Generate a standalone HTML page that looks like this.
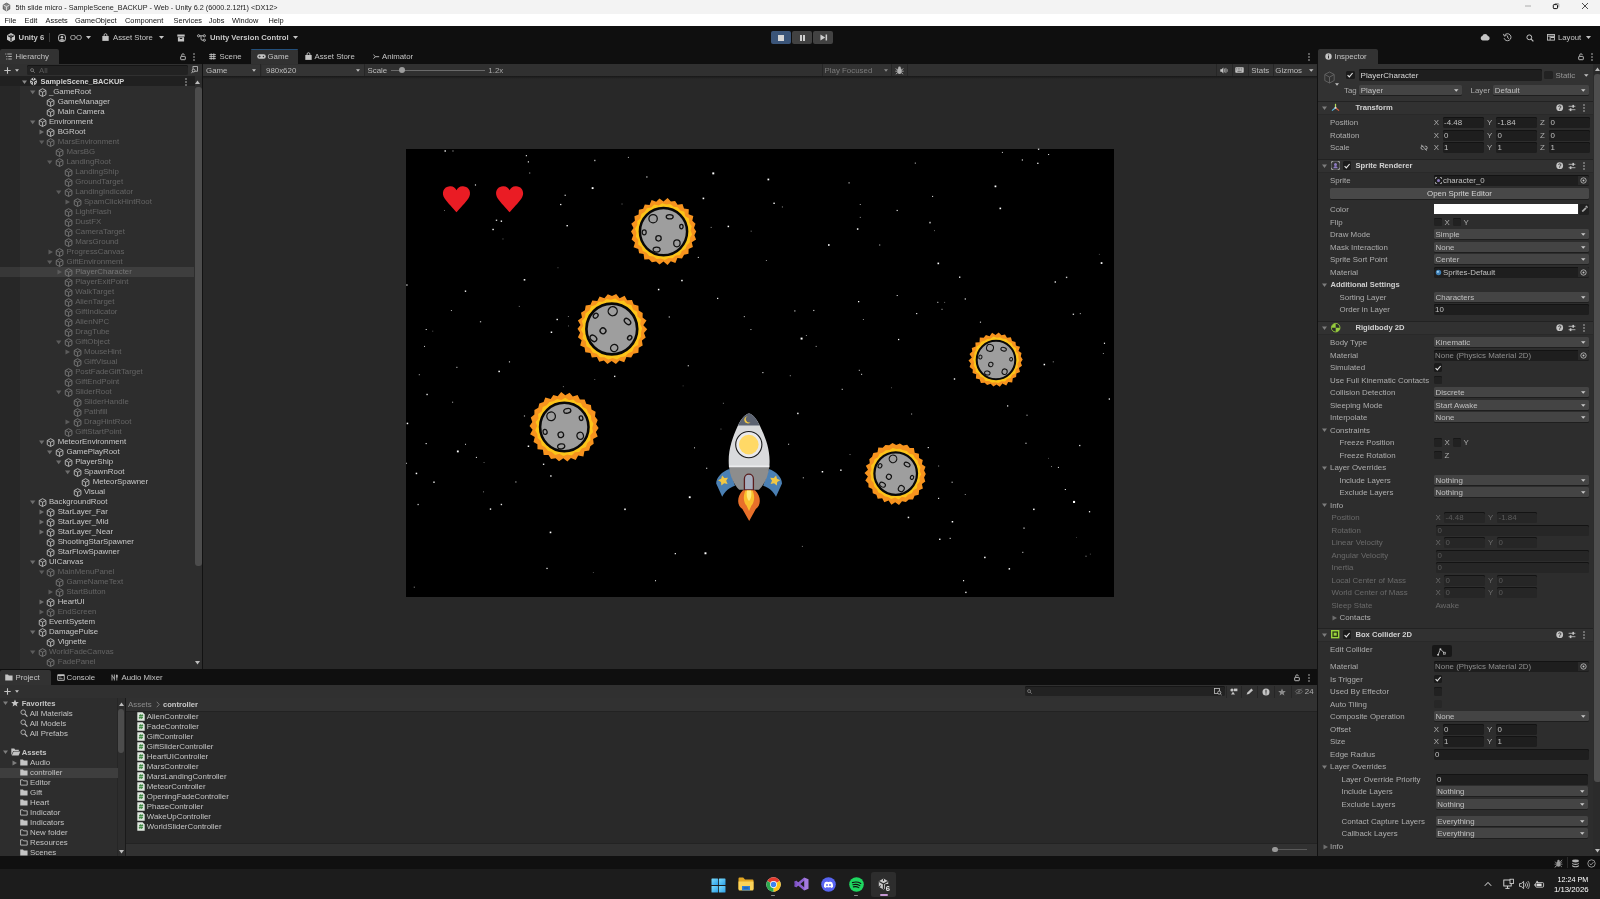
<!DOCTYPE html>
<html><head><meta charset="utf-8"><title>Unity Editor</title><style>
html,body{margin:0;padding:0;background:#1c1c1c;}
#r{position:relative;width:1600px;height:899px;overflow:hidden;font-family:"Liberation Sans",sans-serif;will-change:transform;}
#r div,#r svg{position:absolute;}
#r svg{overflow:visible}
.t{font-size:7.8px;line-height:10px;height:10px;white-space:nowrap;color:#c4c4c4;}
.b{font-weight:bold;}
.win{color:#1a1a1a;font-size:7.25px;}
.menu{color:#111;font-size:7.4px;}
.tbt{color:#c8c8c8;font-size:7.7px;}
.tab{color:#c4c4c4;font-size:7.8px;}
.hi{font-size:7.85px;}
.gt{color:#bdbdbd;font-size:7.9px;}
.in{font-size:7.9px;}
.pj{font-size:7.9px;color:#c4c4c4;}
.b.in,.b.pj{font-size:7.6px;}
</style></head>
<body><div id="r">
<div style="left:0px;top:0px;width:1600px;height:14px;background:#f3f3f3;"></div>
<div style="left:0px;top:14px;width:1600px;height:12px;background:#ffffff;"></div>
<svg style="left:2px;top:2px;" width="9" height="10" viewBox="0 0 16 16"><path d="M8 1.2 L13.8 4.3 V11.7 L8 14.8 L2.2 11.7 V4.3 Z" fill="#8a8a8a" stroke="#3a3a3a" stroke-width="1.3"/><path d="M2.4 4.4 L8 7.5 L13.6 4.4 M8 7.5 V14.6" stroke="#eee" stroke-width="1.4" fill="none"/></svg>
<div class="t win" style="left:15.5px;top:3px;">5th slide micro - SampleScene_BACKUP - Web - Unity 6.2 (6000.2.12f1) &lt;DX12&gt;</div>
<svg style="left:1524px;top:0.7px;" width="8" height="10" viewBox="0 0 8 10"><path d="M1 5 H7" stroke="#9a9a9a" stroke-width="0.8"/></svg>
<svg style="left:1551px;top:1px;" width="10" height="10" viewBox="0 0 10 10"><rect x="2.3" y="3.6" width="4.2" height="4" rx="0.7" fill="none" stroke="#111" stroke-width="1"/><path d="M3.8 2.5 H6.9 A0.9 0.9 0 0 1 7.8 3.4 V6.4" fill="none" stroke="#777" stroke-width="0.7"/></svg>
<svg style="left:1579.5px;top:1px;" width="10" height="10" viewBox="0 0 10 10"><path d="M2 2 L8 8 M8 2 L2 8" stroke="#222" stroke-width="0.8"/></svg>
<div class="t menu" style="left:4.5px;top:16px;">File</div>
<div class="t menu" style="left:24.5px;top:16px;">Edit</div>
<div class="t menu" style="left:45.6px;top:16px;">Assets</div>
<div class="t menu" style="left:75px;top:16px;">GameObject</div>
<div class="t menu" style="left:125px;top:16px;">Component</div>
<div class="t menu" style="left:173.6px;top:16px;">Services</div>
<div class="t menu" style="left:208.75px;top:16px;">Jobs</div>
<div class="t menu" style="left:232px;top:16px;">Window</div>
<div class="t menu" style="left:268.5px;top:16px;">Help</div>
<div style="left:0px;top:26px;width:1600px;height:38px;background:#0f0f0f;"></div>
<svg style="left:5.5px;top:32px;" width="10" height="11" viewBox="0 0 16 16"><path d="M8 0.8 L14.4 4.4 V11.6 L8 15.2 L1.6 11.6 V4.4 Z" fill="#c9c9c9"/><path d="M8 8 L8 14 M8 8 L2.8 5 M8 8 L13.2 5" stroke="#0f0f0f" stroke-width="1.6" fill="none"/><path d="M8 3.2 L11.9 5.5 L8 7.8 L4.1 5.5Z" fill="#0f0f0f" opacity="0.55"/></svg>
<div class="t b tbt" style="left:18.6px;top:33px;">Unity 6</div>
<div style="left:49px;top:33px;width:1px;height:9px;background:#3a3a3a;"></div>
<svg style="left:58px;top:33.5px;" width="8" height="8" viewBox="0 0 8 8"><rect x="0.6" y="0.6" width="6.8" height="6.8" rx="2.2" fill="none" stroke="#c4c4c4" stroke-width="1"/><circle cx="4" cy="3.2" r="1.3" fill="#c4c4c4"/><path d="M1.2 6.8 A2.9 2.4 0 0 1 6.8 6.8 Z" fill="#c4c4c4"/></svg>
<div class="t tbt" style="left:70px;top:33px;">OO</div>
<svg style="left:85.5px;top:36.0px;" width="5" height="3" viewBox="0 0 10 6"><path d="M0 0 H10 L5 6 Z" fill="#c4c4c4"/></svg>
<svg style="left:102.0px;top:33.3px;" width="7" height="8.4" viewBox="0 0 7 8.4"><path d="M0.3 3 H6.7 V7.9 H0.3 Z" fill="#c4c4c4"/><path d="M2.1 3.2 V2.1 A1.4 1.4 0 0 1 4.9 2.1 V3.2" fill="none" stroke="#c4c4c4" stroke-width="0.9"/></svg>
<div class="t tbt" style="left:113px;top:33px;">Asset Store</div>
<svg style="left:158.5px;top:36.0px;" width="5" height="3" viewBox="0 0 10 6"><path d="M0 0 H10 L5 6 Z" fill="#c4c4c4"/></svg>
<svg style="left:176.5px;top:33.5px;" width="8" height="8" viewBox="0 0 8 8"><rect x="0.3" y="0.5" width="7.4" height="2.1" fill="#c4c4c4"/><path d="M0.9 3.2 H7.1 V7.5 H0.9 Z" fill="#c4c4c4"/><rect x="2.8" y="3.9" width="2.4" height="1" fill="#0f0f0f"/></svg>
<svg style="left:197px;top:33.5px;" width="9" height="8" viewBox="0 0 9 8"><circle cx="1.6" cy="1.8" r="1.1" fill="none" stroke="#c4c4c4" stroke-width="0.9"/><circle cx="7.3" cy="1.8" r="1.1" fill="none" stroke="#c4c4c4" stroke-width="0.9"/><circle cx="7.3" cy="6.2" r="1.1" fill="none" stroke="#c4c4c4" stroke-width="0.9"/><path d="M2.7 1.8 H6.2 M4 1.8 V5 A1.2 1.2 0 0 0 5.2 6.2 H6.2" fill="none" stroke="#c4c4c4" stroke-width="0.9"/></svg>
<div class="t b tbt" style="left:210px;top:33px;">Unity Version Control</div>
<svg style="left:292.5px;top:36.0px;" width="5" height="3" viewBox="0 0 10 6"><path d="M0 0 H10 L5 6 Z" fill="#c4c4c4"/></svg>
<div style="left:771px;top:31px;width:20px;height:13px;background:#3b5579;border-radius:2px"></div>
<div style="left:792px;top:31px;width:20px;height:13px;background:#424242;border-radius:2px"></div>
<div style="left:813px;top:31px;width:20px;height:13px;background:#424242;border-radius:2px"></div>
<div style="left:778px;top:34.5px;width:6px;height:6px;background:#d6d6d6;"></div>
<div style="left:800px;top:34.5px;width:1.7px;height:6.2px;background:#cfcfcf;"></div>
<div style="left:803.4px;top:34.5px;width:1.7px;height:6.2px;background:#cfcfcf;"></div>
<svg style="left:819.8px;top:34px;" width="8.4" height="7" viewBox="0 0 9 7"><path d="M0.5 0.3 V6.7 L5.6 3.5 Z" fill="#cfcfcf"/><rect x="6" y="0.3" width="1.6" height="6.4" fill="#cfcfcf"/></svg>
<svg style="left:1480px;top:33px;" width="10" height="8" viewBox="0 0 10 8"><path d="M2.6 7.4 A2.2 2.2 0 0 1 2.3 3.1 A3 3 0 0 1 7.9 2.9 A2.3 2.3 0 0 1 7.8 7.4 Z" fill="#c4c4c4"/></svg>
<svg style="left:1503px;top:33px;" width="9" height="9" viewBox="0 0 9 9"><path d="M1.6 2.2 A3.5 3.5 0 1 1 1.1 5.2" fill="none" stroke="#c4c4c4" stroke-width="0.9"/><path d="M0.4 0.9 L1.4 3.2 L3.6 2.2" fill="none" stroke="#c4c4c4" stroke-width="0.9"/><path d="M4.6 2.7 V4.7 L6 5.6" fill="none" stroke="#c4c4c4" stroke-width="0.9"/></svg>
<svg style="left:1526.0px;top:33.5px;" width="8" height="8" viewBox="0 0 8 8"><circle cx="3.3" cy="3.3" r="2.4" fill="none" stroke="#c4c4c4" stroke-width="1"/><path d="M5.1 5.1 L7.4 7.4" stroke="#c4c4c4" stroke-width="1.2"/></svg>
<svg style="left:1546.6px;top:34.2px;" width="8" height="7" viewBox="0 0 9 8"><rect x="0.5" y="0.5" width="8" height="6.5" fill="none" stroke="#c4c4c4" stroke-width="1"/><path d="M0.5 2.4 H8.5 M3.5 2.4 V7" stroke="#c4c4c4" stroke-width="1"/><rect x="4" y="2.8" width="4" height="1.8" fill="#c4c4c4"/></svg>
<div class="t tbt" style="left:1558px;top:33px;">Layout</div>
<svg style="left:1585.5px;top:36.0px;" width="5" height="3" viewBox="0 0 10 6"><path d="M0 0 H10 L5 6 Z" fill="#c4c4c4"/></svg>
<div style="left:0px;top:49px;width:59px;height:15px;background:#323232;border-radius:2px 2px 0 0"></div>
<svg style="left:5px;top:53px;" width="7" height="7" viewBox="0 0 7 7"><path d="M0.3 1 H1.3 M2.3 1 H6.8 M1.3 3.5 H2.3 M3.3 3.5 H6.8 M1.3 6 H2.3 M3.3 6 H6.8" stroke="#c4c4c4" stroke-width="0.9"/></svg>
<div class="t tab" style="left:15.5px;top:52px;">Hierarchy</div>
<svg style="left:180px;top:52.8px;" width="6" height="7.4" viewBox="0 0 6 7.4"><rect x="0.7" y="3.4" width="4.6" height="3.3" rx="0.5" fill="none" stroke="#bdbdbd" stroke-width="0.95"/><path d="M1.7 3.4 V2.1 A1.3 1.3 0 0 1 4.3 2.1" fill="none" stroke="#bdbdbd" stroke-width="0.85"/></svg>
<svg style="left:192.5px;top:52.5px;" width="2" height="8" viewBox="0 0 2 8"><circle cx="1" cy="1" r="0.8" fill="#bdbdbd"/><circle cx="1" cy="4" r="0.8" fill="#bdbdbd"/><circle cx="1" cy="7" r="0.8" fill="#bdbdbd"/></svg>
<svg style="left:209px;top:53px;" width="7" height="7" viewBox="0 0 7 7"><path d="M0.2 1.6 H6.8 M0.2 3.6 H6.8 M0.2 5.6 H6.8 M2.2 0.4 V6.6 M4.8 0.4 V6.6" stroke="#c4c4c4" stroke-width="0.9"/></svg>
<div class="t tab" style="left:219.5px;top:52px;">Scene</div>
<div style="left:251px;top:49px;width:47px;height:15px;background:#323232;border-radius:2px 2px 0 0"></div>
<div style="left:251px;top:49px;width:47px;height:1px;background:#234f7a;border-radius:2px 2px 0 0"></div>
<svg style="left:256.5px;top:54px;" width="9" height="5" viewBox="0 0 9 5"><rect x="0.2" y="0.3" width="8.6" height="4.4" rx="2.2" fill="#c4c4c4"/><path d="M1.6 2.5 H3.6 M2.6 1.5 V3.5" stroke="#323232" stroke-width="0.7"/><circle cx="6.4" cy="2.5" r="0.7" fill="#323232"/></svg>
<div class="t tab" style="left:267.5px;top:52px;">Game</div>
<svg style="left:304.5px;top:52.3px;" width="7" height="8.4" viewBox="0 0 7 8.4"><path d="M0.3 3 H6.7 V7.9 H0.3 Z" fill="#c4c4c4"/><path d="M2.1 3.2 V2.1 A1.4 1.4 0 0 1 4.9 2.1 V3.2" fill="none" stroke="#c4c4c4" stroke-width="0.9"/></svg>
<div class="t tab" style="left:314.5px;top:52px;">Asset Store</div>
<svg style="left:372.8px;top:53.8px;" width="6.5" height="5.4" viewBox="0 0 8 6"><path d="M0.5 0.6 L3 3 L0.5 5.4 M3 3 H7.6" fill="none" stroke="#c4c4c4" stroke-width="1.1"/></svg>
<div class="t tab" style="left:382px;top:52px;">Animator</div>
<svg style="left:1307.5px;top:52.5px;" width="2" height="8" viewBox="0 0 2 8"><circle cx="1" cy="1" r="0.8" fill="#bdbdbd"/><circle cx="1" cy="4" r="0.8" fill="#bdbdbd"/><circle cx="1" cy="7" r="0.8" fill="#bdbdbd"/></svg>
<div style="left:1318px;top:49px;width:59.5px;height:15px;background:#323232;border-radius:2px 2px 0 0"></div>
<svg style="left:1324.5px;top:53.3px;" width="7" height="7" viewBox="0 0 7 7"><circle cx="3.5" cy="3.5" r="3.2" fill="#c4c4c4"/><rect x="3" y="3" width="1" height="2.4" fill="#323232"/><rect x="3" y="1.6" width="1" height="0.9" fill="#323232"/></svg>
<div class="t tab" style="left:1334.5px;top:52px;">Inspector</div>
<svg style="left:1578px;top:52.8px;" width="6" height="7.4" viewBox="0 0 6 7.4"><rect x="0.7" y="3.4" width="4.6" height="3.3" rx="0.5" fill="none" stroke="#bdbdbd" stroke-width="0.95"/><path d="M1.7 3.4 V2.1 A1.3 1.3 0 0 1 4.3 2.1" fill="none" stroke="#bdbdbd" stroke-width="0.85"/></svg>
<svg style="left:1590.5px;top:52.5px;" width="2" height="8" viewBox="0 0 2 8"><circle cx="1" cy="1" r="0.8" fill="#bdbdbd"/><circle cx="1" cy="4" r="0.8" fill="#bdbdbd"/><circle cx="1" cy="7" r="0.8" fill="#bdbdbd"/></svg>
<div style="left:0px;top:64px;width:201.5px;height:12px;background:#303030;"></div>
<div style="left:0px;top:76px;width:201.5px;height:593px;background:#2d2d2d;"></div>
<div style="left:0px;top:76px;width:19.6px;height:593px;background:#272727;"></div>
<div style="left:201.5px;top:64px;width:1.5px;height:605px;background:#121212;"></div>
<svg style="left:4px;top:67px;" width="7" height="7" viewBox="0 0 7 7"><path d="M3.5 0.3 V6.7 M0.3 3.5 H6.7" stroke="#c4c4c4" stroke-width="1.1"/></svg>
<svg style="left:14.5px;top:68.5px;" width="4" height="3" viewBox="0 0 10 6"><path d="M0 0 H10 L5 6 Z" fill="#c4c4c4"/></svg>
<div style="left:27.3px;top:65px;width:161px;height:10px;background:#222222;border-radius:2px;box-shadow:inset 0 0.8px 0 #121212"></div>
<svg style="left:30.0px;top:67.8px;" width="5" height="5" viewBox="0 0 8 8"><circle cx="3.3" cy="3.3" r="2.4" fill="none" stroke="#9a9a9a" stroke-width="1"/><path d="M5.1 5.1 L7.4 7.4" stroke="#9a9a9a" stroke-width="1.2"/></svg>
<div class="t" style="left:39px;top:66px;color:#5a5a5a">All</div>
<svg style="left:190.5px;top:66px;" width="7" height="8" viewBox="0 0 7 8"><rect x="2" y="0.6" width="4.4" height="4.6" fill="none" stroke="#c4c4c4" stroke-width="0.8"/><circle cx="2.6" cy="4.6" r="1.4" fill="#303030" stroke="#c4c4c4" stroke-width="0.8"/><path d="M1.6 5.6 L0.5 7.2" stroke="#c4c4c4" stroke-width="0.9"/></svg>
<div style="left:0px;top:76.3px;width:194.5px;height:10.2px;background:#202020;"></div>
<svg style="left:21.5px;top:79.5px;" width="5" height="5" viewBox="0 0 10 10"><path d="M0 1 H10 L5 8 Z" fill="#8a8a8a"/></svg>
<svg style="left:28.5px;top:77px;" width="9" height="9" viewBox="0 0 16 16"><path d="M8 1 L14 4.4 V11.6 L8 15 L2 11.6 V4.4 Z" fill="#d0d0d0"/><path d="M8 8 V15 M8 8 L2 4.4 M8 8 L14 4.4" stroke="#202020" stroke-width="2.2"/><path d="M8 1 V4.5 M2 11.6 L5 9.8 M14 11.6 L11 9.8" stroke="#202020" stroke-width="1.6"/></svg>
<div class="t b" style="left:40.5px;top:77px;color:#d2d2d2;font-size:7.4px">SampleScene_BACKUP</div>
<svg style="left:185px;top:77.7px;" width="2" height="8" viewBox="0 0 2 8"><circle cx="1" cy="1" r="0.8" fill="#bdbdbd"/><circle cx="1" cy="4" r="0.8" fill="#bdbdbd"/><circle cx="1" cy="7" r="0.8" fill="#bdbdbd"/></svg>
<div style="left:194.5px;top:76px;width:7px;height:593px;background:#2d2d2d;"></div>
<div style="left:195px;top:87px;width:6.5px;height:478.5px;background:#4c4c4c;border-radius:3px"></div>
<svg style="left:195px;top:79.5px;" width="5" height="4" viewBox="0 0 5 4"><path d="M0 4 H5 L2.5 0.6 Z" fill="#bdbdbd"/></svg>
<svg style="left:195px;top:661px;" width="5" height="4" viewBox="0 0 5 4"><path d="M0 0 H5 L2.5 3.4 Z" fill="#bdbdbd"/></svg>
<div style="left:0;top:76px;width:194px;height:593px;overflow:hidden">
<svg style="left:37.699999999999996px;top:11.6px;" width="9.2" height="9.2" viewBox="0 0 16 16"><path d="M8 1.2 L13.8 4.3 V11.7 L8 14.8 L2.2 11.7 V4.3 Z M2.4 4.4 L8 7.5 L13.6 4.4 M8 7.5 V14.6" fill="none" stroke="#c0c0c0" stroke-width="1.55" stroke-linejoin="round"/></svg>
<svg style="left:29.8px;top:13.5px;" width="5.4" height="5.4" viewBox="0 0 10 10"><path d="M0 1 H10 L5 8 Z" fill="#6e6e6e"/></svg>
<div class="t hi" style="left:48.9px;top:11px;color:#c8c8c8">_GameRoot</div>
<svg style="left:46.449999999999996px;top:21.6px;" width="9.2" height="9.2" viewBox="0 0 16 16"><path d="M8 1.2 L13.8 4.3 V11.7 L8 14.8 L2.2 11.7 V4.3 Z M2.4 4.4 L8 7.5 L13.6 4.4 M8 7.5 V14.6" fill="none" stroke="#c0c0c0" stroke-width="1.55" stroke-linejoin="round"/></svg>
<div class="t hi" style="left:57.65px;top:21px;color:#c8c8c8">GameManager</div>
<svg style="left:46.449999999999996px;top:31.6px;" width="9.2" height="9.2" viewBox="0 0 16 16"><path d="M8 1.2 L13.8 4.3 V11.7 L8 14.8 L2.2 11.7 V4.3 Z M2.4 4.4 L8 7.5 L13.6 4.4 M8 7.5 V14.6" fill="none" stroke="#c0c0c0" stroke-width="1.55" stroke-linejoin="round"/></svg>
<div class="t hi" style="left:57.65px;top:31px;color:#c8c8c8">Main Camera</div>
<svg style="left:37.699999999999996px;top:41.6px;" width="9.2" height="9.2" viewBox="0 0 16 16"><path d="M8 1.2 L13.8 4.3 V11.7 L8 14.8 L2.2 11.7 V4.3 Z M2.4 4.4 L8 7.5 L13.6 4.4 M8 7.5 V14.6" fill="none" stroke="#c0c0c0" stroke-width="1.55" stroke-linejoin="round"/></svg>
<svg style="left:29.8px;top:43.5px;" width="5.4" height="5.4" viewBox="0 0 10 10"><path d="M0 1 H10 L5 8 Z" fill="#6e6e6e"/></svg>
<div class="t hi" style="left:48.9px;top:41px;color:#c8c8c8">Environment</div>
<svg style="left:46.449999999999996px;top:51.6px;" width="9.2" height="9.2" viewBox="0 0 16 16"><path d="M8 1.2 L13.8 4.3 V11.7 L8 14.8 L2.2 11.7 V4.3 Z M2.4 4.4 L8 7.5 L13.6 4.4 M8 7.5 V14.6" fill="none" stroke="#c0c0c0" stroke-width="1.55" stroke-linejoin="round"/></svg>
<svg style="left:39.15px;top:53.199999999999996px;" width="5" height="5.75" viewBox="0 0 10 10"><path d="M1 0 V10 L10 5 Z" fill="#6e6e6e"/></svg>
<div class="t hi" style="left:57.65px;top:51px;color:#c8c8c8">BGRoot</div>
<svg style="left:46.449999999999996px;top:61.6px;" width="9.2" height="9.2" viewBox="0 0 16 16"><path d="M8 1.2 L13.8 4.3 V11.7 L8 14.8 L2.2 11.7 V4.3 Z M2.4 4.4 L8 7.5 L13.6 4.4 M8 7.5 V14.6" fill="none" stroke="#7a7a7a" stroke-width="1.55" stroke-linejoin="round"/></svg>
<svg style="left:38.55px;top:63.5px;" width="5.4" height="5.4" viewBox="0 0 10 10"><path d="M0 1 H10 L5 8 Z" fill="#5c5c5c"/></svg>
<div class="t hi" style="left:57.65px;top:61px;color:#646464">MarsEnvironment</div>
<svg style="left:55.199999999999996px;top:71.60000000000001px;" width="9.2" height="9.2" viewBox="0 0 16 16"><path d="M8 1.2 L13.8 4.3 V11.7 L8 14.8 L2.2 11.7 V4.3 Z M2.4 4.4 L8 7.5 L13.6 4.4 M8 7.5 V14.6" fill="none" stroke="#7a7a7a" stroke-width="1.55" stroke-linejoin="round"/></svg>
<div class="t hi" style="left:66.4px;top:71px;color:#646464">MarsBG</div>
<svg style="left:55.199999999999996px;top:81.60000000000001px;" width="9.2" height="9.2" viewBox="0 0 16 16"><path d="M8 1.2 L13.8 4.3 V11.7 L8 14.8 L2.2 11.7 V4.3 Z M2.4 4.4 L8 7.5 L13.6 4.4 M8 7.5 V14.6" fill="none" stroke="#7a7a7a" stroke-width="1.55" stroke-linejoin="round"/></svg>
<svg style="left:47.3px;top:83.5px;" width="5.4" height="5.4" viewBox="0 0 10 10"><path d="M0 1 H10 L5 8 Z" fill="#5c5c5c"/></svg>
<div class="t hi" style="left:66.4px;top:81px;color:#646464">LandingRoot</div>
<svg style="left:63.949999999999996px;top:91.60000000000001px;" width="9.2" height="9.2" viewBox="0 0 16 16"><path d="M8 1.2 L13.8 4.3 V11.7 L8 14.8 L2.2 11.7 V4.3 Z M2.4 4.4 L8 7.5 L13.6 4.4 M8 7.5 V14.6" fill="none" stroke="#7a7a7a" stroke-width="1.55" stroke-linejoin="round"/></svg>
<div class="t hi" style="left:75.15px;top:91px;color:#646464">LandingShip</div>
<svg style="left:63.949999999999996px;top:101.60000000000001px;" width="9.2" height="9.2" viewBox="0 0 16 16"><path d="M8 1.2 L13.8 4.3 V11.7 L8 14.8 L2.2 11.7 V4.3 Z M2.4 4.4 L8 7.5 L13.6 4.4 M8 7.5 V14.6" fill="none" stroke="#7a7a7a" stroke-width="1.55" stroke-linejoin="round"/></svg>
<div class="t hi" style="left:75.15px;top:101px;color:#646464">GroundTarget</div>
<svg style="left:63.949999999999996px;top:111.60000000000001px;" width="9.2" height="9.2" viewBox="0 0 16 16"><path d="M8 1.2 L13.8 4.3 V11.7 L8 14.8 L2.2 11.7 V4.3 Z M2.4 4.4 L8 7.5 L13.6 4.4 M8 7.5 V14.6" fill="none" stroke="#7a7a7a" stroke-width="1.55" stroke-linejoin="round"/></svg>
<svg style="left:56.05px;top:113.5px;" width="5.4" height="5.4" viewBox="0 0 10 10"><path d="M0 1 H10 L5 8 Z" fill="#5c5c5c"/></svg>
<div class="t hi" style="left:75.15px;top:111px;color:#646464">LandingIndicator</div>
<svg style="left:72.7px;top:121.60000000000001px;" width="9.2" height="9.2" viewBox="0 0 16 16"><path d="M8 1.2 L13.8 4.3 V11.7 L8 14.8 L2.2 11.7 V4.3 Z M2.4 4.4 L8 7.5 L13.6 4.4 M8 7.5 V14.6" fill="none" stroke="#7a7a7a" stroke-width="1.55" stroke-linejoin="round"/></svg>
<svg style="left:65.4px;top:123.2px;" width="5" height="5.75" viewBox="0 0 10 10"><path d="M1 0 V10 L10 5 Z" fill="#5c5c5c"/></svg>
<div class="t hi" style="left:83.9px;top:121px;color:#646464">SpamClickHintRoot</div>
<svg style="left:63.949999999999996px;top:131.6px;" width="9.2" height="9.2" viewBox="0 0 16 16"><path d="M8 1.2 L13.8 4.3 V11.7 L8 14.8 L2.2 11.7 V4.3 Z M2.4 4.4 L8 7.5 L13.6 4.4 M8 7.5 V14.6" fill="none" stroke="#7a7a7a" stroke-width="1.55" stroke-linejoin="round"/></svg>
<div class="t hi" style="left:75.15px;top:131px;color:#646464">LightFlash</div>
<svg style="left:63.949999999999996px;top:141.6px;" width="9.2" height="9.2" viewBox="0 0 16 16"><path d="M8 1.2 L13.8 4.3 V11.7 L8 14.8 L2.2 11.7 V4.3 Z M2.4 4.4 L8 7.5 L13.6 4.4 M8 7.5 V14.6" fill="none" stroke="#7a7a7a" stroke-width="1.55" stroke-linejoin="round"/></svg>
<div class="t hi" style="left:75.15px;top:141px;color:#646464">DustFX</div>
<svg style="left:63.949999999999996px;top:151.6px;" width="9.2" height="9.2" viewBox="0 0 16 16"><path d="M8 1.2 L13.8 4.3 V11.7 L8 14.8 L2.2 11.7 V4.3 Z M2.4 4.4 L8 7.5 L13.6 4.4 M8 7.5 V14.6" fill="none" stroke="#7a7a7a" stroke-width="1.55" stroke-linejoin="round"/></svg>
<div class="t hi" style="left:75.15px;top:151px;color:#646464">CameraTarget</div>
<svg style="left:63.949999999999996px;top:161.6px;" width="9.2" height="9.2" viewBox="0 0 16 16"><path d="M8 1.2 L13.8 4.3 V11.7 L8 14.8 L2.2 11.7 V4.3 Z M2.4 4.4 L8 7.5 L13.6 4.4 M8 7.5 V14.6" fill="none" stroke="#7a7a7a" stroke-width="1.55" stroke-linejoin="round"/></svg>
<div class="t hi" style="left:75.15px;top:161px;color:#646464">MarsGround</div>
<svg style="left:55.199999999999996px;top:171.6px;" width="9.2" height="9.2" viewBox="0 0 16 16"><path d="M8 1.2 L13.8 4.3 V11.7 L8 14.8 L2.2 11.7 V4.3 Z M2.4 4.4 L8 7.5 L13.6 4.4 M8 7.5 V14.6" fill="none" stroke="#7a7a7a" stroke-width="1.55" stroke-linejoin="round"/></svg>
<svg style="left:47.9px;top:173.20000000000002px;" width="5" height="5.75" viewBox="0 0 10 10"><path d="M1 0 V10 L10 5 Z" fill="#5c5c5c"/></svg>
<div class="t hi" style="left:66.4px;top:171px;color:#646464">ProgressCanvas</div>
<svg style="left:55.199999999999996px;top:181.6px;" width="9.2" height="9.2" viewBox="0 0 16 16"><path d="M8 1.2 L13.8 4.3 V11.7 L8 14.8 L2.2 11.7 V4.3 Z M2.4 4.4 L8 7.5 L13.6 4.4 M8 7.5 V14.6" fill="none" stroke="#7a7a7a" stroke-width="1.55" stroke-linejoin="round"/></svg>
<svg style="left:47.3px;top:183.5px;" width="5.4" height="5.4" viewBox="0 0 10 10"><path d="M0 1 H10 L5 8 Z" fill="#5c5c5c"/></svg>
<div class="t hi" style="left:66.4px;top:181px;color:#646464">GiftEnvironment</div>
<div style="left:0px;top:190.9px;width:194.5px;height:10px;background:#3e3e3e;"></div>
<div style="left:0px;top:190.9px;width:19.6px;height:10px;background:#373737;"></div>
<svg style="left:63.949999999999996px;top:191.6px;" width="9.2" height="9.2" viewBox="0 0 16 16"><path d="M8 1.2 L13.8 4.3 V11.7 L8 14.8 L2.2 11.7 V4.3 Z M2.4 4.4 L8 7.5 L13.6 4.4 M8 7.5 V14.6" fill="none" stroke="#7a7a7a" stroke-width="1.55" stroke-linejoin="round"/></svg>
<svg style="left:56.65px;top:193.20000000000002px;" width="5" height="5.75" viewBox="0 0 10 10"><path d="M1 0 V10 L10 5 Z" fill="#5c5c5c"/></svg>
<div class="t hi" style="left:75.15px;top:191px;color:#767676">PlayerCharacter</div>
<svg style="left:63.949999999999996px;top:201.6px;" width="9.2" height="9.2" viewBox="0 0 16 16"><path d="M8 1.2 L13.8 4.3 V11.7 L8 14.8 L2.2 11.7 V4.3 Z M2.4 4.4 L8 7.5 L13.6 4.4 M8 7.5 V14.6" fill="none" stroke="#7a7a7a" stroke-width="1.55" stroke-linejoin="round"/></svg>
<div class="t hi" style="left:75.15px;top:201px;color:#646464">PlayerExitPoint</div>
<svg style="left:63.949999999999996px;top:211.6px;" width="9.2" height="9.2" viewBox="0 0 16 16"><path d="M8 1.2 L13.8 4.3 V11.7 L8 14.8 L2.2 11.7 V4.3 Z M2.4 4.4 L8 7.5 L13.6 4.4 M8 7.5 V14.6" fill="none" stroke="#7a7a7a" stroke-width="1.55" stroke-linejoin="round"/></svg>
<div class="t hi" style="left:75.15px;top:211px;color:#646464">WalkTarget</div>
<svg style="left:63.949999999999996px;top:221.6px;" width="9.2" height="9.2" viewBox="0 0 16 16"><path d="M8 1.2 L13.8 4.3 V11.7 L8 14.8 L2.2 11.7 V4.3 Z M2.4 4.4 L8 7.5 L13.6 4.4 M8 7.5 V14.6" fill="none" stroke="#7a7a7a" stroke-width="1.55" stroke-linejoin="round"/></svg>
<div class="t hi" style="left:75.15px;top:221px;color:#646464">AlienTarget</div>
<svg style="left:63.949999999999996px;top:231.6px;" width="9.2" height="9.2" viewBox="0 0 16 16"><path d="M8 1.2 L13.8 4.3 V11.7 L8 14.8 L2.2 11.7 V4.3 Z M2.4 4.4 L8 7.5 L13.6 4.4 M8 7.5 V14.6" fill="none" stroke="#7a7a7a" stroke-width="1.55" stroke-linejoin="round"/></svg>
<div class="t hi" style="left:75.15px;top:231px;color:#646464">GiftIndicator</div>
<svg style="left:63.949999999999996px;top:241.6px;" width="9.2" height="9.2" viewBox="0 0 16 16"><path d="M8 1.2 L13.8 4.3 V11.7 L8 14.8 L2.2 11.7 V4.3 Z M2.4 4.4 L8 7.5 L13.6 4.4 M8 7.5 V14.6" fill="none" stroke="#7a7a7a" stroke-width="1.55" stroke-linejoin="round"/></svg>
<div class="t hi" style="left:75.15px;top:241px;color:#646464">AlienNPC</div>
<svg style="left:63.949999999999996px;top:251.6px;" width="9.2" height="9.2" viewBox="0 0 16 16"><path d="M8 1.2 L13.8 4.3 V11.7 L8 14.8 L2.2 11.7 V4.3 Z M2.4 4.4 L8 7.5 L13.6 4.4 M8 7.5 V14.6" fill="none" stroke="#7a7a7a" stroke-width="1.55" stroke-linejoin="round"/></svg>
<div class="t hi" style="left:75.15px;top:251px;color:#646464">DragTube</div>
<svg style="left:63.949999999999996px;top:261.59999999999997px;" width="9.2" height="9.2" viewBox="0 0 16 16"><path d="M8 1.2 L13.8 4.3 V11.7 L8 14.8 L2.2 11.7 V4.3 Z M2.4 4.4 L8 7.5 L13.6 4.4 M8 7.5 V14.6" fill="none" stroke="#7a7a7a" stroke-width="1.55" stroke-linejoin="round"/></svg>
<svg style="left:56.05px;top:263.5px;" width="5.4" height="5.4" viewBox="0 0 10 10"><path d="M0 1 H10 L5 8 Z" fill="#5c5c5c"/></svg>
<div class="t hi" style="left:75.15px;top:261px;color:#646464">GiftObject</div>
<svg style="left:72.7px;top:271.59999999999997px;" width="9.2" height="9.2" viewBox="0 0 16 16"><path d="M8 1.2 L13.8 4.3 V11.7 L8 14.8 L2.2 11.7 V4.3 Z M2.4 4.4 L8 7.5 L13.6 4.4 M8 7.5 V14.6" fill="none" stroke="#7a7a7a" stroke-width="1.55" stroke-linejoin="round"/></svg>
<svg style="left:65.4px;top:273.2px;" width="5" height="5.75" viewBox="0 0 10 10"><path d="M1 0 V10 L10 5 Z" fill="#5c5c5c"/></svg>
<div class="t hi" style="left:83.9px;top:271px;color:#646464">MouseHint</div>
<svg style="left:72.7px;top:281.59999999999997px;" width="9.2" height="9.2" viewBox="0 0 16 16"><path d="M8 1.2 L13.8 4.3 V11.7 L8 14.8 L2.2 11.7 V4.3 Z M2.4 4.4 L8 7.5 L13.6 4.4 M8 7.5 V14.6" fill="none" stroke="#7a7a7a" stroke-width="1.55" stroke-linejoin="round"/></svg>
<div class="t hi" style="left:83.9px;top:281px;color:#646464">GiftVisual</div>
<svg style="left:63.949999999999996px;top:291.59999999999997px;" width="9.2" height="9.2" viewBox="0 0 16 16"><path d="M8 1.2 L13.8 4.3 V11.7 L8 14.8 L2.2 11.7 V4.3 Z M2.4 4.4 L8 7.5 L13.6 4.4 M8 7.5 V14.6" fill="none" stroke="#7a7a7a" stroke-width="1.55" stroke-linejoin="round"/></svg>
<div class="t hi" style="left:75.15px;top:291px;color:#646464">PostFadeGiftTarget</div>
<svg style="left:63.949999999999996px;top:301.59999999999997px;" width="9.2" height="9.2" viewBox="0 0 16 16"><path d="M8 1.2 L13.8 4.3 V11.7 L8 14.8 L2.2 11.7 V4.3 Z M2.4 4.4 L8 7.5 L13.6 4.4 M8 7.5 V14.6" fill="none" stroke="#7a7a7a" stroke-width="1.55" stroke-linejoin="round"/></svg>
<div class="t hi" style="left:75.15px;top:301px;color:#646464">GiftEndPoint</div>
<svg style="left:63.949999999999996px;top:311.59999999999997px;" width="9.2" height="9.2" viewBox="0 0 16 16"><path d="M8 1.2 L13.8 4.3 V11.7 L8 14.8 L2.2 11.7 V4.3 Z M2.4 4.4 L8 7.5 L13.6 4.4 M8 7.5 V14.6" fill="none" stroke="#7a7a7a" stroke-width="1.55" stroke-linejoin="round"/></svg>
<svg style="left:56.05px;top:313.5px;" width="5.4" height="5.4" viewBox="0 0 10 10"><path d="M0 1 H10 L5 8 Z" fill="#5c5c5c"/></svg>
<div class="t hi" style="left:75.15px;top:311px;color:#646464">SliderRoot</div>
<svg style="left:72.7px;top:321.59999999999997px;" width="9.2" height="9.2" viewBox="0 0 16 16"><path d="M8 1.2 L13.8 4.3 V11.7 L8 14.8 L2.2 11.7 V4.3 Z M2.4 4.4 L8 7.5 L13.6 4.4 M8 7.5 V14.6" fill="none" stroke="#7a7a7a" stroke-width="1.55" stroke-linejoin="round"/></svg>
<div class="t hi" style="left:83.9px;top:321px;color:#646464">SliderHandle</div>
<svg style="left:72.7px;top:331.59999999999997px;" width="9.2" height="9.2" viewBox="0 0 16 16"><path d="M8 1.2 L13.8 4.3 V11.7 L8 14.8 L2.2 11.7 V4.3 Z M2.4 4.4 L8 7.5 L13.6 4.4 M8 7.5 V14.6" fill="none" stroke="#7a7a7a" stroke-width="1.55" stroke-linejoin="round"/></svg>
<div class="t hi" style="left:83.9px;top:331px;color:#646464">Pathfill</div>
<svg style="left:72.7px;top:341.59999999999997px;" width="9.2" height="9.2" viewBox="0 0 16 16"><path d="M8 1.2 L13.8 4.3 V11.7 L8 14.8 L2.2 11.7 V4.3 Z M2.4 4.4 L8 7.5 L13.6 4.4 M8 7.5 V14.6" fill="none" stroke="#7a7a7a" stroke-width="1.55" stroke-linejoin="round"/></svg>
<svg style="left:65.4px;top:343.2px;" width="5" height="5.75" viewBox="0 0 10 10"><path d="M1 0 V10 L10 5 Z" fill="#5c5c5c"/></svg>
<div class="t hi" style="left:83.9px;top:341px;color:#646464">DragHintRoot</div>
<svg style="left:63.949999999999996px;top:351.59999999999997px;" width="9.2" height="9.2" viewBox="0 0 16 16"><path d="M8 1.2 L13.8 4.3 V11.7 L8 14.8 L2.2 11.7 V4.3 Z M2.4 4.4 L8 7.5 L13.6 4.4 M8 7.5 V14.6" fill="none" stroke="#7a7a7a" stroke-width="1.55" stroke-linejoin="round"/></svg>
<div class="t hi" style="left:75.15px;top:351px;color:#646464">GiftStartPoint</div>
<svg style="left:46.449999999999996px;top:361.59999999999997px;" width="9.2" height="9.2" viewBox="0 0 16 16"><path d="M8 1.2 L13.8 4.3 V11.7 L8 14.8 L2.2 11.7 V4.3 Z M2.4 4.4 L8 7.5 L13.6 4.4 M8 7.5 V14.6" fill="none" stroke="#c0c0c0" stroke-width="1.55" stroke-linejoin="round"/></svg>
<svg style="left:38.55px;top:363.5px;" width="5.4" height="5.4" viewBox="0 0 10 10"><path d="M0 1 H10 L5 8 Z" fill="#6e6e6e"/></svg>
<div class="t hi" style="left:57.65px;top:361px;color:#c8c8c8">MeteorEnvironment</div>
<svg style="left:55.199999999999996px;top:371.59999999999997px;" width="9.2" height="9.2" viewBox="0 0 16 16"><path d="M8 1.2 L13.8 4.3 V11.7 L8 14.8 L2.2 11.7 V4.3 Z M2.4 4.4 L8 7.5 L13.6 4.4 M8 7.5 V14.6" fill="none" stroke="#c0c0c0" stroke-width="1.55" stroke-linejoin="round"/></svg>
<svg style="left:47.3px;top:373.5px;" width="5.4" height="5.4" viewBox="0 0 10 10"><path d="M0 1 H10 L5 8 Z" fill="#6e6e6e"/></svg>
<div class="t hi" style="left:66.4px;top:371px;color:#c8c8c8">GamePlayRoot</div>
<svg style="left:63.949999999999996px;top:381.59999999999997px;" width="9.2" height="9.2" viewBox="0 0 16 16"><path d="M8 1.2 L13.8 4.3 V11.7 L8 14.8 L2.2 11.7 V4.3 Z M2.4 4.4 L8 7.5 L13.6 4.4 M8 7.5 V14.6" fill="none" stroke="#c0c0c0" stroke-width="1.55" stroke-linejoin="round"/></svg>
<svg style="left:56.05px;top:383.5px;" width="5.4" height="5.4" viewBox="0 0 10 10"><path d="M0 1 H10 L5 8 Z" fill="#6e6e6e"/></svg>
<div class="t hi" style="left:75.15px;top:381px;color:#c8c8c8">PlayerShip</div>
<svg style="left:72.7px;top:391.59999999999997px;" width="9.2" height="9.2" viewBox="0 0 16 16"><path d="M8 1.2 L13.8 4.3 V11.7 L8 14.8 L2.2 11.7 V4.3 Z M2.4 4.4 L8 7.5 L13.6 4.4 M8 7.5 V14.6" fill="none" stroke="#c0c0c0" stroke-width="1.55" stroke-linejoin="round"/></svg>
<svg style="left:64.8px;top:393.5px;" width="5.4" height="5.4" viewBox="0 0 10 10"><path d="M0 1 H10 L5 8 Z" fill="#6e6e6e"/></svg>
<div class="t hi" style="left:83.9px;top:391px;color:#c8c8c8">SpawnRoot</div>
<svg style="left:81.45px;top:401.59999999999997px;" width="9.2" height="9.2" viewBox="0 0 16 16"><path d="M8 1.2 L13.8 4.3 V11.7 L8 14.8 L2.2 11.7 V4.3 Z M2.4 4.4 L8 7.5 L13.6 4.4 M8 7.5 V14.6" fill="none" stroke="#c0c0c0" stroke-width="1.55" stroke-linejoin="round"/></svg>
<div class="t hi" style="left:92.65px;top:401px;color:#c8c8c8">MeteorSpawner</div>
<svg style="left:72.7px;top:411.59999999999997px;" width="9.2" height="9.2" viewBox="0 0 16 16"><path d="M8 1.2 L13.8 4.3 V11.7 L8 14.8 L2.2 11.7 V4.3 Z M2.4 4.4 L8 7.5 L13.6 4.4 M8 7.5 V14.6" fill="none" stroke="#c0c0c0" stroke-width="1.55" stroke-linejoin="round"/></svg>
<div class="t hi" style="left:83.9px;top:411px;color:#c8c8c8">Visual</div>
<svg style="left:37.699999999999996px;top:421.59999999999997px;" width="9.2" height="9.2" viewBox="0 0 16 16"><path d="M8 1.2 L13.8 4.3 V11.7 L8 14.8 L2.2 11.7 V4.3 Z M2.4 4.4 L8 7.5 L13.6 4.4 M8 7.5 V14.6" fill="none" stroke="#c0c0c0" stroke-width="1.55" stroke-linejoin="round"/></svg>
<svg style="left:29.8px;top:423.5px;" width="5.4" height="5.4" viewBox="0 0 10 10"><path d="M0 1 H10 L5 8 Z" fill="#6e6e6e"/></svg>
<div class="t hi" style="left:48.9px;top:421px;color:#c8c8c8">BackgroundRoot</div>
<svg style="left:46.449999999999996px;top:431.59999999999997px;" width="9.2" height="9.2" viewBox="0 0 16 16"><path d="M8 1.2 L13.8 4.3 V11.7 L8 14.8 L2.2 11.7 V4.3 Z M2.4 4.4 L8 7.5 L13.6 4.4 M8 7.5 V14.6" fill="none" stroke="#c0c0c0" stroke-width="1.55" stroke-linejoin="round"/></svg>
<svg style="left:39.15px;top:433.2px;" width="5" height="5.75" viewBox="0 0 10 10"><path d="M1 0 V10 L10 5 Z" fill="#6e6e6e"/></svg>
<div class="t hi" style="left:57.65px;top:431px;color:#c8c8c8">StarLayer_Far</div>
<svg style="left:46.449999999999996px;top:441.59999999999997px;" width="9.2" height="9.2" viewBox="0 0 16 16"><path d="M8 1.2 L13.8 4.3 V11.7 L8 14.8 L2.2 11.7 V4.3 Z M2.4 4.4 L8 7.5 L13.6 4.4 M8 7.5 V14.6" fill="none" stroke="#c0c0c0" stroke-width="1.55" stroke-linejoin="round"/></svg>
<svg style="left:39.15px;top:443.2px;" width="5" height="5.75" viewBox="0 0 10 10"><path d="M1 0 V10 L10 5 Z" fill="#6e6e6e"/></svg>
<div class="t hi" style="left:57.65px;top:441px;color:#c8c8c8">StarLayer_Mid</div>
<svg style="left:46.449999999999996px;top:451.59999999999997px;" width="9.2" height="9.2" viewBox="0 0 16 16"><path d="M8 1.2 L13.8 4.3 V11.7 L8 14.8 L2.2 11.7 V4.3 Z M2.4 4.4 L8 7.5 L13.6 4.4 M8 7.5 V14.6" fill="none" stroke="#c0c0c0" stroke-width="1.55" stroke-linejoin="round"/></svg>
<svg style="left:39.15px;top:453.2px;" width="5" height="5.75" viewBox="0 0 10 10"><path d="M1 0 V10 L10 5 Z" fill="#6e6e6e"/></svg>
<div class="t hi" style="left:57.65px;top:451px;color:#c8c8c8">StarLayer_Near</div>
<svg style="left:46.449999999999996px;top:461.59999999999997px;" width="9.2" height="9.2" viewBox="0 0 16 16"><path d="M8 1.2 L13.8 4.3 V11.7 L8 14.8 L2.2 11.7 V4.3 Z M2.4 4.4 L8 7.5 L13.6 4.4 M8 7.5 V14.6" fill="none" stroke="#c0c0c0" stroke-width="1.55" stroke-linejoin="round"/></svg>
<div class="t hi" style="left:57.65px;top:461px;color:#c8c8c8">ShootingStarSpawner</div>
<svg style="left:46.449999999999996px;top:471.59999999999997px;" width="9.2" height="9.2" viewBox="0 0 16 16"><path d="M8 1.2 L13.8 4.3 V11.7 L8 14.8 L2.2 11.7 V4.3 Z M2.4 4.4 L8 7.5 L13.6 4.4 M8 7.5 V14.6" fill="none" stroke="#c0c0c0" stroke-width="1.55" stroke-linejoin="round"/></svg>
<div class="t hi" style="left:57.65px;top:471px;color:#c8c8c8">StarFlowSpawner</div>
<svg style="left:37.699999999999996px;top:481.59999999999997px;" width="9.2" height="9.2" viewBox="0 0 16 16"><path d="M8 1.2 L13.8 4.3 V11.7 L8 14.8 L2.2 11.7 V4.3 Z M2.4 4.4 L8 7.5 L13.6 4.4 M8 7.5 V14.6" fill="none" stroke="#c0c0c0" stroke-width="1.55" stroke-linejoin="round"/></svg>
<svg style="left:29.8px;top:483.5px;" width="5.4" height="5.4" viewBox="0 0 10 10"><path d="M0 1 H10 L5 8 Z" fill="#6e6e6e"/></svg>
<div class="t hi" style="left:48.9px;top:481px;color:#c8c8c8">UICanvas</div>
<svg style="left:46.449999999999996px;top:491.59999999999997px;" width="9.2" height="9.2" viewBox="0 0 16 16"><path d="M8 1.2 L13.8 4.3 V11.7 L8 14.8 L2.2 11.7 V4.3 Z M2.4 4.4 L8 7.5 L13.6 4.4 M8 7.5 V14.6" fill="none" stroke="#7a7a7a" stroke-width="1.55" stroke-linejoin="round"/></svg>
<svg style="left:38.55px;top:493.5px;" width="5.4" height="5.4" viewBox="0 0 10 10"><path d="M0 1 H10 L5 8 Z" fill="#5c5c5c"/></svg>
<div class="t hi" style="left:57.65px;top:491px;color:#646464">MainMenuPanel</div>
<svg style="left:55.199999999999996px;top:501.59999999999997px;" width="9.2" height="9.2" viewBox="0 0 16 16"><path d="M8 1.2 L13.8 4.3 V11.7 L8 14.8 L2.2 11.7 V4.3 Z M2.4 4.4 L8 7.5 L13.6 4.4 M8 7.5 V14.6" fill="none" stroke="#7a7a7a" stroke-width="1.55" stroke-linejoin="round"/></svg>
<div class="t hi" style="left:66.4px;top:501px;color:#646464">GameNameText</div>
<svg style="left:55.199999999999996px;top:511.6px;" width="9.2" height="9.2" viewBox="0 0 16 16"><path d="M8 1.2 L13.8 4.3 V11.7 L8 14.8 L2.2 11.7 V4.3 Z M2.4 4.4 L8 7.5 L13.6 4.4 M8 7.5 V14.6" fill="none" stroke="#7a7a7a" stroke-width="1.55" stroke-linejoin="round"/></svg>
<svg style="left:47.9px;top:513.1999999999999px;" width="5" height="5.75" viewBox="0 0 10 10"><path d="M1 0 V10 L10 5 Z" fill="#5c5c5c"/></svg>
<div class="t hi" style="left:66.4px;top:511px;color:#646464">StartButton</div>
<svg style="left:46.449999999999996px;top:521.6px;" width="9.2" height="9.2" viewBox="0 0 16 16"><path d="M8 1.2 L13.8 4.3 V11.7 L8 14.8 L2.2 11.7 V4.3 Z M2.4 4.4 L8 7.5 L13.6 4.4 M8 7.5 V14.6" fill="none" stroke="#c0c0c0" stroke-width="1.55" stroke-linejoin="round"/></svg>
<svg style="left:39.15px;top:523.1999999999999px;" width="5" height="5.75" viewBox="0 0 10 10"><path d="M1 0 V10 L10 5 Z" fill="#6e6e6e"/></svg>
<div class="t hi" style="left:57.65px;top:521px;color:#c8c8c8">HeartUI</div>
<svg style="left:46.449999999999996px;top:531.6px;" width="9.2" height="9.2" viewBox="0 0 16 16"><path d="M8 1.2 L13.8 4.3 V11.7 L8 14.8 L2.2 11.7 V4.3 Z M2.4 4.4 L8 7.5 L13.6 4.4 M8 7.5 V14.6" fill="none" stroke="#7a7a7a" stroke-width="1.55" stroke-linejoin="round"/></svg>
<svg style="left:39.15px;top:533.1999999999999px;" width="5" height="5.75" viewBox="0 0 10 10"><path d="M1 0 V10 L10 5 Z" fill="#5c5c5c"/></svg>
<div class="t hi" style="left:57.65px;top:531px;color:#646464">EndScreen</div>
<svg style="left:37.699999999999996px;top:541.6px;" width="9.2" height="9.2" viewBox="0 0 16 16"><path d="M8 1.2 L13.8 4.3 V11.7 L8 14.8 L2.2 11.7 V4.3 Z M2.4 4.4 L8 7.5 L13.6 4.4 M8 7.5 V14.6" fill="none" stroke="#c0c0c0" stroke-width="1.55" stroke-linejoin="round"/></svg>
<div class="t hi" style="left:48.9px;top:541px;color:#c8c8c8">EventSystem</div>
<svg style="left:37.699999999999996px;top:551.6px;" width="9.2" height="9.2" viewBox="0 0 16 16"><path d="M8 1.2 L13.8 4.3 V11.7 L8 14.8 L2.2 11.7 V4.3 Z M2.4 4.4 L8 7.5 L13.6 4.4 M8 7.5 V14.6" fill="none" stroke="#c0c0c0" stroke-width="1.55" stroke-linejoin="round"/></svg>
<svg style="left:29.8px;top:553.5px;" width="5.4" height="5.4" viewBox="0 0 10 10"><path d="M0 1 H10 L5 8 Z" fill="#6e6e6e"/></svg>
<div class="t hi" style="left:48.9px;top:551px;color:#c8c8c8">DamagePulse</div>
<svg style="left:46.449999999999996px;top:561.6px;" width="9.2" height="9.2" viewBox="0 0 16 16"><path d="M8 1.2 L13.8 4.3 V11.7 L8 14.8 L2.2 11.7 V4.3 Z M2.4 4.4 L8 7.5 L13.6 4.4 M8 7.5 V14.6" fill="none" stroke="#c0c0c0" stroke-width="1.55" stroke-linejoin="round"/></svg>
<div class="t hi" style="left:57.65px;top:561px;color:#c8c8c8">Vignette</div>
<svg style="left:37.699999999999996px;top:571.6px;" width="9.2" height="9.2" viewBox="0 0 16 16"><path d="M8 1.2 L13.8 4.3 V11.7 L8 14.8 L2.2 11.7 V4.3 Z M2.4 4.4 L8 7.5 L13.6 4.4 M8 7.5 V14.6" fill="none" stroke="#7a7a7a" stroke-width="1.55" stroke-linejoin="round"/></svg>
<svg style="left:29.8px;top:573.5px;" width="5.4" height="5.4" viewBox="0 0 10 10"><path d="M0 1 H10 L5 8 Z" fill="#5c5c5c"/></svg>
<div class="t hi" style="left:48.9px;top:571px;color:#646464">WorldFadeCanvas</div>
<svg style="left:46.449999999999996px;top:581.6px;" width="9.2" height="9.2" viewBox="0 0 16 16"><path d="M8 1.2 L13.8 4.3 V11.7 L8 14.8 L2.2 11.7 V4.3 Z M2.4 4.4 L8 7.5 L13.6 4.4 M8 7.5 V14.6" fill="none" stroke="#7a7a7a" stroke-width="1.55" stroke-linejoin="round"/></svg>
<div class="t hi" style="left:57.65px;top:581px;color:#646464">FadePanel</div>
</div>
<div style="left:203px;top:64px;width:1113.5px;height:12.2px;background:#303030;"></div>
<div style="left:203px;top:76px;width:1113.5px;height:593px;background:#282828;"></div>
<div style="left:203px;top:76.2px;width:1113.5px;height:3px;background:#282828;background:linear-gradient(#181818,#282828)"></div>
<div style="left:1316.5px;top:64px;width:1.5px;height:792px;background:#121212;"></div>
<div style="left:203px;top:64.5px;width:57px;height:11.2px;background:#343434;"></div>
<div class="t gt" style="left:206px;top:66px;">Game</div>
<svg style="left:252.0px;top:68.8px;" width="4" height="3" viewBox="0 0 10 6"><path d="M0 0 H10 L5 6 Z" fill="#c0c0c0"/></svg>
<div style="left:260.2px;top:64px;width:1.2px;height:12px;background:#262626;"></div>
<div style="left:261.5px;top:64.5px;width:102px;height:11.2px;background:#343434;"></div>
<div class="t gt" style="left:266px;top:66px;">980x620</div>
<svg style="left:355.5px;top:68.8px;" width="4" height="3" viewBox="0 0 10 6"><path d="M0 0 H10 L5 6 Z" fill="#c0c0c0"/></svg>
<div style="left:363.5px;top:64px;width:1px;height:12px;background:#262626;"></div>
<div class="t gt" style="left:367.5px;top:66px;">Scale</div>
<div style="left:390.5px;top:69.7px;width:94px;height:0.8px;background:#6a6a6a;"></div>
<div style="left:399px;top:67.1px;width:6px;height:6px;background:#9c9c9c;border-radius:50%"></div>
<div class="t gt" style="left:488.3px;top:66px;color:#a8a8a8">1.2x</div>
<div style="left:822px;top:64.5px;width:69px;height:11.2px;background:#323232;"></div>
<div style="left:822px;top:64px;width:0.7px;height:12px;background:#262626;"></div>
<div style="left:891px;top:64px;width:0.7px;height:12px;background:#262626;"></div>
<div style="left:906.5px;top:64px;width:0.7px;height:12px;background:#262626;"></div>
<div class="t gt" style="left:824.5px;top:66px;color:#7a7a7a">Play Focused</div>
<svg style="left:883.5px;top:68.5px;" width="4" height="3" viewBox="0 0 10 6"><path d="M0 0 H10 L5 6 Z" fill="#8a8a8a"/></svg>
<svg style="left:894.5px;top:65.5px;" width="9" height="9" viewBox="0 0 9 9"><ellipse cx="4.5" cy="5" rx="2.3" ry="3" fill="#b4b4b4"/><circle cx="4.5" cy="1.9" r="1.3" fill="#b4b4b4"/><path d="M0.6 2.6 L2.6 4 M8.4 2.6 L6.4 4 M0.3 5.2 H2.3 M8.7 5.2 H6.7 M0.8 8.2 L2.7 6.6 M8.2 8.2 L6.3 6.6" stroke="#b4b4b4" stroke-width="0.8"/></svg>
<svg style="left:1219.5px;top:66.5px;" width="8" height="7" viewBox="0 0 8 7"><path d="M0.3 2.3 H1.6 L3.4 0.6 V6.4 L1.6 4.7 H0.3 Z" fill="#c4c4c4"/><path d="M4.6 1.6 V5.4 M5.9 0.9 V6.1 M7.2 2.2 V4.8" stroke="#c4c4c4" stroke-width="0.7"/></svg>
<svg style="left:1235px;top:67px;" width="9" height="6" viewBox="0 0 9 6"><rect x="0.3" y="0.3" width="8.4" height="5.4" rx="0.6" fill="#c4c4c4"/><path d="M1.4 1.6 H7.6 M1.4 2.9 H7.6" stroke="#303030" stroke-width="0.6" stroke-dasharray="0.8 0.7"/><path d="M2.4 4.4 H6.6" stroke="#303030" stroke-width="0.6"/></svg>
<div style="left:1247.5px;top:64.5px;width:25px;height:11.2px;background:#333333;"></div>
<div style="left:1273px;top:64.5px;width:43px;height:11.2px;background:#333333;"></div>
<div style="left:1215.5px;top:64px;width:0.7px;height:12px;background:#262626;"></div>
<div style="left:1231.5px;top:64px;width:0.7px;height:12px;background:#262626;"></div>
<div style="left:1247.5px;top:64px;width:0.7px;height:12px;background:#262626;"></div>
<div style="left:1273px;top:64px;width:0.7px;height:12px;background:#262626;"></div>
<div class="t gt" style="left:1251.3px;top:66px;">Stats</div>
<div class="t gt" style="left:1275.3px;top:66px;">Gizmos</div>
<svg style="left:1308.75px;top:68.5px;" width="4.5" height="3" viewBox="0 0 10 6"><path d="M0 0 H10 L5 6 Z" fill="#c0c0c0"/></svg>
<svg style="left:406px;top:149px" width="708" height="448" viewBox="406 149 708 448">
<rect x="406" y="149" width="708" height="448" fill="#000"/>
<g fill="#fff"><rect x="444.5" y="150.3" width="1.38" height="1.38" opacity="1.00"/><rect x="452.4" y="150.4" width="1.15" height="1.15" opacity="0.57"/><rect x="525.8" y="155.1" width="1.15" height="1.15" opacity="0.92"/><rect x="527.8" y="161.3" width="1.15" height="1.15" opacity="1.00"/><rect x="529.2" y="172.5" width="1.03" height="1.03" opacity="0.69"/><rect x="474.9" y="184.4" width="1.15" height="1.15" opacity="0.92"/><rect x="594.1" y="159.8" width="1.38" height="1.38" opacity="0.69"/><rect x="627.9" y="156.9" width="1.03" height="1.03" opacity="0.69"/><rect x="591.7" y="187.2" width="1.84" height="1.84" opacity="1.00"/><rect x="564.6" y="194.7" width="1.15" height="1.15" opacity="0.92"/><rect x="560.1" y="203.9" width="1.26" height="1.26" opacity="1.00"/><rect x="566.5" y="225.0" width="1.38" height="1.38" opacity="1.00"/><rect x="495.8" y="219.6" width="1.38" height="1.38" opacity="0.80"/><rect x="500.7" y="220.5" width="1.38" height="1.38" opacity="1.00"/><rect x="492.4" y="228.8" width="1.38" height="1.38" opacity="1.00"/><rect x="502.5" y="238.5" width="0.92" height="0.92" opacity="0.46"/><rect x="444.0" y="210.0" width="0.92" height="0.92" opacity="0.46"/><rect x="523.7" y="279.0" width="1.61" height="1.61" opacity="0.92"/><rect x="464.8" y="290.5" width="1.38" height="1.38" opacity="1.00"/><rect x="406.3" y="284.4" width="1.26" height="1.26" opacity="0.92"/><rect x="557.5" y="267.3" width="0.92" height="0.92" opacity="0.40"/><rect x="621.5" y="203.5" width="1.03" height="1.03" opacity="0.40"/><rect x="712.3" y="172.4" width="1.95" height="1.95" opacity="1.00"/><rect x="767.5" y="178.6" width="1.72" height="1.72" opacity="1.00"/><rect x="646.3" y="176.4" width="1.15" height="1.15" opacity="0.92"/><rect x="702.6" y="197.6" width="1.61" height="1.61" opacity="1.00"/><rect x="773.4" y="202.6" width="1.38" height="1.38" opacity="1.00"/><rect x="781.9" y="206.5" width="0.92" height="0.92" opacity="0.69"/><rect x="727.6" y="225.7" width="1.49" height="1.49" opacity="1.00"/><rect x="710.7" y="226.9" width="0.92" height="0.92" opacity="0.69"/><rect x="750.7" y="230.7" width="0.92" height="0.92" opacity="0.57"/><rect x="848.5" y="182.3" width="1.15" height="1.15" opacity="0.80"/><rect x="859.8" y="204.0" width="0.92" height="0.92" opacity="0.80"/><rect x="859.8" y="216.9" width="0.92" height="0.92" opacity="0.69"/><rect x="856.9" y="228.3" width="1.49" height="1.49" opacity="1.00"/><rect x="828.0" y="244.2" width="1.61" height="1.61" opacity="1.00"/><rect x="879.2" y="244.5" width="1.03" height="1.03" opacity="0.80"/><rect x="697.8" y="256.9" width="1.03" height="1.03" opacity="0.92"/><rect x="765.9" y="260.0" width="0.92" height="0.92" opacity="0.69"/><rect x="681.2" y="279.8" width="1.49" height="1.49" opacity="1.00"/><rect x="657.9" y="288.8" width="1.49" height="1.49" opacity="1.00"/><rect x="717.0" y="297.8" width="1.26" height="1.26" opacity="0.92"/><rect x="914.8" y="162.6" width="1.03" height="1.03" opacity="0.80"/><rect x="1001.9" y="151.9" width="1.03" height="1.03" opacity="0.80"/><rect x="1037.9" y="148.6" width="1.38" height="1.38" opacity="0.80"/><rect x="1048.1" y="154.0" width="1.03" height="1.03" opacity="0.92"/><rect x="1021.8" y="159.4" width="1.15" height="1.15" opacity="0.92"/><rect x="1037.2" y="162.7" width="1.26" height="1.26" opacity="1.00"/><rect x="994.6" y="185.5" width="1.72" height="1.72" opacity="1.00"/><rect x="932.1" y="195.9" width="1.03" height="1.03" opacity="0.92"/><rect x="896.6" y="209.9" width="1.15" height="1.15" opacity="0.92"/><rect x="999.5" y="207.6" width="1.61" height="1.61" opacity="1.00"/><rect x="929.2" y="221.8" width="1.61" height="1.61" opacity="0.69"/><rect x="934.0" y="230.2" width="0.92" height="0.92" opacity="0.46"/><rect x="937.5" y="262.6" width="1.61" height="1.61" opacity="1.00"/><rect x="959.0" y="276.5" width="1.38" height="1.38" opacity="0.92"/><rect x="1100.7" y="262.2" width="1.72" height="1.72" opacity="1.00"/><rect x="1098.9" y="253.9" width="0.8" height="0.8" opacity="0.46"/><rect x="1065.9" y="276.7" width="1.38" height="1.38" opacity="0.80"/><rect x="1054.6" y="281.3" width="1.38" height="1.38" opacity="0.92"/><rect x="896.7" y="295.0" width="1.03" height="1.03" opacity="0.92"/><rect x="964.7" y="298.4" width="1.15" height="1.15" opacity="1.00"/><rect x="450.9" y="310.0" width="1.03" height="1.03" opacity="0.69"/><rect x="479.9" y="321.1" width="1.26" height="1.26" opacity="0.69"/><rect x="425.7" y="329.0" width="1.03" height="1.03" opacity="0.92"/><rect x="432.3" y="330.7" width="0.92" height="0.92" opacity="0.40"/><rect x="424.0" y="345.9" width="1.03" height="1.03" opacity="0.80"/><rect x="518.8" y="305.9" width="0.92" height="0.92" opacity="0.57"/><rect x="556.5" y="318.8" width="1.38" height="1.38" opacity="1.00"/><rect x="567.9" y="316.1" width="0.92" height="0.92" opacity="0.57"/><rect x="568.1" y="325.5" width="0.92" height="0.92" opacity="0.46"/><rect x="550.7" y="331.5" width="1.49" height="1.49" opacity="1.00"/><rect x="508.9" y="361.3" width="1.15" height="1.15" opacity="0.80"/><rect x="456.3" y="366.8" width="1.15" height="1.15" opacity="0.69"/><rect x="498.4" y="370.7" width="1.49" height="1.49" opacity="1.00"/><rect x="418.8" y="374.2" width="1.03" height="1.03" opacity="0.69"/><rect x="426.4" y="393.8" width="1.38" height="1.38" opacity="0.92"/><rect x="452.1" y="401.7" width="1.03" height="1.03" opacity="0.69"/><rect x="406.7" y="422.7" width="1.49" height="1.49" opacity="1.00"/><rect x="425.6" y="443.0" width="1.15" height="1.15" opacity="0.92"/><rect x="465.0" y="443.8" width="1.03" height="1.03" opacity="0.80"/><rect x="523.9" y="415.4" width="1.15" height="1.15" opacity="0.69"/><rect x="527.7" y="445.5" width="1.49" height="1.49" opacity="1.00"/><rect x="562.9" y="386.2" width="0.92" height="0.92" opacity="0.57"/><rect x="614.0" y="375.7" width="1.38" height="1.38" opacity="0.92"/><rect x="594.3" y="379.0" width="0.92" height="0.92" opacity="0.46"/><rect x="668.7" y="316.4" width="1.15" height="1.15" opacity="0.80"/><rect x="743.8" y="316.1" width="1.03" height="1.03" opacity="0.80"/><rect x="750.4" y="329.0" width="1.03" height="1.03" opacity="0.69"/><rect x="794.2" y="310.3" width="1.26" height="1.26" opacity="0.69"/><rect x="813.2" y="309.9" width="1.15" height="1.15" opacity="0.80"/><rect x="858.0" y="301.0" width="1.26" height="1.26" opacity="1.00"/><rect x="862.9" y="319.0" width="0.92" height="0.92" opacity="0.69"/><rect x="800.6" y="337.6" width="1.95" height="1.95" opacity="1.00"/><rect x="805.9" y="335.0" width="0.92" height="0.92" opacity="0.69"/><rect x="815.7" y="345.9" width="0.92" height="0.92" opacity="0.80"/><rect x="687.7" y="365.1" width="1.26" height="1.26" opacity="0.69"/><rect x="762.3" y="372.0" width="1.15" height="1.15" opacity="0.80"/><rect x="789.8" y="375.2" width="1.03" height="1.03" opacity="0.57"/><rect x="858.8" y="369.8" width="1.03" height="1.03" opacity="0.80"/><rect x="861.1" y="373.8" width="1.03" height="1.03" opacity="0.92"/><rect x="841.7" y="388.8" width="1.03" height="1.03" opacity="0.92"/><rect x="682.7" y="385.5" width="0.8" height="0.8" opacity="0.40"/><rect x="722.9" y="402.8" width="0.92" height="0.92" opacity="0.57"/><rect x="797.1" y="412.7" width="1.49" height="1.49" opacity="0.92"/><rect x="720.5" y="428.6" width="0.92" height="0.92" opacity="0.46"/><rect x="788.0" y="443.7" width="1.15" height="1.15" opacity="0.69"/><rect x="694.0" y="447.3" width="1.03" height="1.03" opacity="0.80"/><rect x="937.2" y="301.8" width="1.15" height="1.15" opacity="0.69"/><rect x="944.2" y="301.9" width="0.92" height="0.92" opacity="0.46"/><rect x="941.5" y="308.8" width="1.03" height="1.03" opacity="0.69"/><rect x="916.1" y="313.0" width="1.15" height="1.15" opacity="0.92"/><rect x="979.9" y="321.6" width="1.15" height="1.15" opacity="0.80"/><rect x="1072.7" y="313.6" width="1.38" height="1.38" opacity="0.80"/><rect x="1079.8" y="313.1" width="1.03" height="1.03" opacity="0.69"/><rect x="898.0" y="338.9" width="1.26" height="1.26" opacity="1.00"/><rect x="1103.9" y="342.7" width="1.15" height="1.15" opacity="1.00"/><rect x="1102.9" y="353.1" width="0.92" height="0.92" opacity="0.69"/><rect x="1043.6" y="363.8" width="1.49" height="1.49" opacity="1.00"/><rect x="1052.8" y="361.4" width="0.92" height="0.92" opacity="0.69"/><rect x="953.8" y="378.3" width="1.38" height="1.38" opacity="1.00"/><rect x="891.1" y="387.3" width="0.92" height="0.92" opacity="0.40"/><rect x="1108.7" y="398.4" width="1.26" height="1.26" opacity="1.00"/><rect x="1007.0" y="405.3" width="1.26" height="1.26" opacity="0.92"/><rect x="1026.5" y="414.7" width="1.03" height="1.03" opacity="0.80"/><rect x="911.1" y="413.5" width="1.03" height="1.03" opacity="0.69"/><rect x="1025.4" y="442.7" width="1.15" height="1.15" opacity="0.80"/><rect x="1079.1" y="444.9" width="1.26" height="1.26" opacity="0.92"/><rect x="927.7" y="447.0" width="1.15" height="1.15" opacity="0.92"/><rect x="456.9" y="450.5" width="1.84" height="1.84" opacity="1.00"/><rect x="475.9" y="456.9" width="1.03" height="1.03" opacity="0.92"/><rect x="483.6" y="462.1" width="0.92" height="0.92" opacity="0.46"/><rect x="406.1" y="462.8" width="0.92" height="0.92" opacity="0.92"/><rect x="415.7" y="472.7" width="1.49" height="1.49" opacity="1.00"/><rect x="433.3" y="481.5" width="1.38" height="1.38" opacity="1.00"/><rect x="417.5" y="503.9" width="1.26" height="1.26" opacity="0.80"/><rect x="483.1" y="491.4" width="0.92" height="0.92" opacity="0.57"/><rect x="515.3" y="481.4" width="1.15" height="1.15" opacity="0.69"/><rect x="500.7" y="503.8" width="1.38" height="1.38" opacity="0.92"/><rect x="489.8" y="508.4" width="1.38" height="1.38" opacity="1.00"/><rect x="542.9" y="463.6" width="1.38" height="1.38" opacity="0.92"/><rect x="550.2" y="475.3" width="1.38" height="1.38" opacity="1.00"/><rect x="549.7" y="531.6" width="1.61" height="1.61" opacity="1.00"/><rect x="624.2" y="508.5" width="1.61" height="1.61" opacity="0.92"/><rect x="546.4" y="567.8" width="1.26" height="1.26" opacity="0.92"/><rect x="413.8" y="586.7" width="0.92" height="0.92" opacity="0.69"/><rect x="592.9" y="572.1" width="0.92" height="0.92" opacity="0.34"/><rect x="706.1" y="467.7" width="1.15" height="1.15" opacity="0.80"/><rect x="688.8" y="496.3" width="1.84" height="1.84" opacity="1.00"/><rect x="802.8" y="477.3" width="1.03" height="1.03" opacity="0.80"/><rect x="821.7" y="471.0" width="1.49" height="1.49" opacity="1.00"/><rect x="840.2" y="469.5" width="1.38" height="1.38" opacity="1.00"/><rect x="849.5" y="454.0" width="1.03" height="1.03" opacity="0.46"/><rect x="674.7" y="553.0" width="1.26" height="1.26" opacity="0.92"/><rect x="704.5" y="552.3" width="1.95" height="1.95" opacity="1.00"/><rect x="801.9" y="545.9" width="0.92" height="0.92" opacity="0.57"/><rect x="655.0" y="580.2" width="1.03" height="1.03" opacity="0.92"/><rect x="938.1" y="465.5" width="1.03" height="1.03" opacity="0.57"/><rect x="951.6" y="481.7" width="1.03" height="1.03" opacity="0.92"/><rect x="964.8" y="494.0" width="0.92" height="0.92" opacity="0.69"/><rect x="938.0" y="497.8" width="1.15" height="1.15" opacity="0.92"/><rect x="907.7" y="516.7" width="1.49" height="1.49" opacity="0.92"/><rect x="951.7" y="521.0" width="1.49" height="1.49" opacity="1.00"/><rect x="939.1" y="538.6" width="1.38" height="1.38" opacity="1.00"/><rect x="949.6" y="537.8" width="1.15" height="1.15" opacity="0.80"/><rect x="984.1" y="556.7" width="1.49" height="1.49" opacity="1.00"/><rect x="1008.6" y="568.1" width="1.49" height="1.49" opacity="1.00"/><rect x="1022.2" y="551.8" width="1.15" height="1.15" opacity="0.69"/><rect x="1023.4" y="527.5" width="1.26" height="1.26" opacity="0.80"/><rect x="1033.1" y="508.6" width="1.49" height="1.49" opacity="1.00"/><rect x="1073.0" y="500.9" width="2.07" height="2.07" opacity="1.00"/><rect x="1088.9" y="511.1" width="1.26" height="1.26" opacity="1.00"/><rect x="1064.8" y="489.0" width="1.03" height="1.03" opacity="1.00"/><rect x="1057.9" y="466.9" width="1.03" height="1.03" opacity="0.92"/><rect x="1051.1" y="466.1" width="0.92" height="0.92" opacity="0.57"/><rect x="1048.0" y="457.9" width="0.8" height="0.8" opacity="0.46"/><rect x="1076.2" y="537.2" width="0.8" height="0.8" opacity="0.34"/><rect x="1085.5" y="555.7" width="1.03" height="1.03" opacity="0.57"/><rect x="1089.9" y="553.7" width="0.8" height="0.8" opacity="0.46"/><rect x="963.0" y="580.1" width="1.15" height="1.15" opacity="1.00"/><rect x="965.2" y="591.7" width="1.38" height="1.38" opacity="0.92"/></g>
<path transform="translate(442.75,186.00) scale(0.2750,0.2758)" d="M50 95 C40 84 16 58 7 45 C-6 27 2 2 26 1 C38 0 46 7 50 15 C54 7 62 0 74 1 C98 2 106 27 93 45 C84 58 60 84 50 95 Z" fill="#ea1c24"/>
<path transform="translate(495.85,186.00) scale(0.2750,0.2758)" d="M50 95 C40 84 16 58 7 45 C-6 27 2 2 26 1 C38 0 46 7 50 15 C54 7 62 0 74 1 C98 2 106 27 93 45 C84 58 60 84 50 95 Z" fill="#ea1c24"/>
<polygon points="696.2,231.6 694.4,235.3 696.1,239.6 691.8,242.3 692.9,247.0 688.6,248.9 688.5,253.8 684.1,254.8 682.0,258.5 677.4,258.1 675.4,263.1 670.8,261.2 667.5,264.9 663.5,261.5 659.5,264.5 656.1,261.6 651.9,262.3 649.0,259.2 644.3,259.4 643.6,254.0 639.1,253.2 638.3,249.0 633.6,247.3 635.0,242.4 631.6,239.5 633.2,235.3 631.0,231.6 633.5,228.0 631.3,223.7 634.9,220.8 634.4,216.3 638.6,214.4 638.9,209.8 643.2,208.7 644.8,204.5 649.6,205.1 651.6,200.1 656.2,201.8 659.5,198.4 663.5,201.4 667.6,198.0 670.9,201.4 675.1,201.1 677.6,204.7 682.5,204.0 684.0,208.5 688.8,209.2 688.6,214.3 693.3,216.0 692.3,220.7 695.5,223.7 694.0,227.9" fill="#f7931e"/>
<polygon points="692.1,234.5 689.9,238.1 689.8,242.3 686.8,245.2 685.4,249.0 681.8,251.0 680.0,255.0 675.7,255.5 672.6,258.2 668.5,258.1 664.7,260.1 660.8,258.5 656.7,259.1 653.4,256.5 649.2,256.1 646.6,252.8 642.8,251.1 641.6,247.0 638.2,244.5 638.4,240.2 635.9,236.8 636.5,232.8 634.9,228.7 637.3,225.1 637.3,221.0 640.5,218.2 641.3,213.9 644.8,211.8 647.0,208.2 651.3,207.6 654.2,204.4 658.6,205.4 662.3,203.2 666.2,204.5 670.3,204.0 673.6,206.7 677.7,207.2 680.3,210.5 684.4,211.8 685.2,216.3 689.0,218.6 689.2,222.8 691.7,226.3 690.6,230.4" fill="#fcc419"/>
<circle cx="663.5" cy="231.6" r="23.6" fill="#9e9e9e" stroke="#080808" stroke-width="2.50"/>
<ellipse cx="653.1" cy="218.7" rx="4.2" ry="4.2" fill="none" stroke="#111" stroke-width="1.25" transform="rotate(0 653.1 218.7)"/>
<ellipse cx="669.7" cy="216.7" rx="3.5" ry="2.2" fill="none" stroke="#111" stroke-width="1.25" transform="rotate(0 669.7 216.7)"/>
<ellipse cx="681.4" cy="226.6" rx="1.7" ry="2.2" fill="none" stroke="#111" stroke-width="1.25" transform="rotate(0 681.4 226.6)"/>
<ellipse cx="644.2" cy="232.3" rx="2.0" ry="2.5" fill="none" stroke="#111" stroke-width="1.25" transform="rotate(0 644.2 232.3)"/>
<ellipse cx="658.5" cy="238.3" rx="2.7" ry="2.7" fill="none" stroke="#111" stroke-width="1.25" transform="rotate(0 658.5 238.3)"/>
<ellipse cx="676.9" cy="243.3" rx="3.2" ry="3.5" fill="none" stroke="#111" stroke-width="1.25" transform="rotate(0 676.9 243.3)"/>
<ellipse cx="656.6" cy="249.5" rx="3.5" ry="2.5" fill="none" stroke="#111" stroke-width="1.25" transform="rotate(0 656.6 249.5)"/>
<polygon points="638.4,352.8 633.4,353.7 631.2,357.4 626.4,357.1 624.2,362.2 619.4,360.6 615.9,364.0 611.6,360.9 607.4,363.9 603.9,360.4 599.2,361.8 596.9,357.0 591.8,357.6 590.4,352.9 585.3,352.3 584.6,347.5 580.2,345.4 581.6,340.3 577.9,337.2 580.1,332.7 577.5,328.8 580.5,325.0 577.9,320.5 582.0,317.5 581.0,312.7 584.9,310.3 585.7,305.6 590.5,304.7 592.3,300.4 597.3,301.0 599.6,296.4 604.4,298.2 607.8,294.2 612.0,296.1 616.2,294.0 619.6,298.2 624.6,295.8 627.1,300.2 632.0,300.0 633.7,304.6 638.4,305.7 638.7,310.6 642.7,313.0 642.6,317.5 646.5,320.6 643.3,325.3 647.2,329.2 644.0,333.1 645.7,337.5 641.9,340.6 642.7,345.4 638.7,347.8" fill="#f7931e"/>
<polygon points="632.4,351.6 628.3,353.2 625.2,356.4 620.8,356.9 617.0,359.5 612.6,357.9 608.3,359.4 604.3,357.3 599.8,357.3 596.8,353.8 592.5,352.5 590.5,348.5 586.4,346.3 586.0,341.6 582.4,338.5 583.4,333.9 580.9,329.8 583.2,325.7 581.9,321.1 585.0,317.6 585.6,313.2 589.4,310.6 591.1,306.3 595.5,305.0 598.4,301.7 603.0,301.7 606.6,298.9 611.0,299.7 615.4,298.5 619.1,301.3 623.9,300.6 626.9,304.1 631.4,305.1 633.0,309.6 637.2,311.7 637.5,316.4 641.0,319.6 640.2,324.1 642.1,328.2 640.9,332.4 641.1,336.7 638.5,340.3 638.2,345.0 634.0,347.2" fill="#fcc419"/>
<circle cx="611.8" cy="329" r="25.4" fill="#9e9e9e" stroke="#080808" stroke-width="2.69"/>
<ellipse cx="612.7" cy="311.2" rx="4.5" ry="4.5" fill="none" stroke="#111" stroke-width="1.35" transform="rotate(42 612.7 311.2)"/>
<ellipse cx="627.5" cy="321.5" rx="3.7" ry="2.4" fill="none" stroke="#111" stroke-width="1.35" transform="rotate(42 627.5 321.5)"/>
<ellipse cx="629.7" cy="337.8" rx="1.9" ry="2.4" fill="none" stroke="#111" stroke-width="1.35" transform="rotate(42 629.7 337.8)"/>
<ellipse cx="595.7" cy="315.7" rx="2.1" ry="2.7" fill="none" stroke="#111" stroke-width="1.35" transform="rotate(42 595.7 315.7)"/>
<ellipse cx="603.0" cy="330.8" rx="2.9" ry="2.9" fill="none" stroke="#111" stroke-width="1.35" transform="rotate(42 603.0 330.8)"/>
<ellipse cx="614.2" cy="348.0" rx="3.5" ry="3.7" fill="none" stroke="#111" stroke-width="1.35" transform="rotate(42 614.2 348.0)"/>
<ellipse cx="593.4" cy="338.3" rx="3.7" ry="2.7" fill="none" stroke="#111" stroke-width="1.35" transform="rotate(42 593.4 338.3)"/>
<polygon points="597.7,419.9 596.1,424.2 598.6,428.1 595.9,431.9 597.7,436.4 593.1,439.0 593.7,443.7 590.3,446.2 589.1,450.5 584.4,451.2 583.4,456.6 578.2,455.6 575.7,460.1 570.9,458.1 567.4,461.6 563.3,458.3 559.0,461.3 555.6,458.2 551.0,458.9 548.5,455.0 543.7,455.0 542.9,449.7 537.5,449.3 537.4,444.3 533.5,441.9 534.8,437.1 530.1,434.3 532.6,429.8 529.5,425.9 532.3,422.1 530.8,417.6 534.4,414.5 534.4,410.1 538.3,407.8 539.3,403.4 543.6,402.0 545.3,397.6 550.7,398.9 553.3,394.9 557.7,396.2 561.2,392.0 565.3,395.3 569.6,392.7 572.8,396.6 577.6,395.1 579.9,399.4 584.7,399.4 586.2,403.8 590.9,404.9 591.5,409.4 595.6,411.8 595.0,416.5" fill="#f7931e"/>
<polygon points="593.5,423.8 592.2,427.9 593.1,432.1 590.2,435.5 590.6,440.1 587.3,442.9 585.9,447.0 581.7,448.4 579.3,452.1 574.8,452.2 571.6,455.4 567.3,454.4 563.4,455.9 559.5,453.8 555.1,454.9 551.9,452.0 548.0,450.7 545.4,447.4 541.8,445.3 540.9,441.0 537.6,438.1 537.4,433.9 535.1,430.2 537.1,426.1 535.6,421.9 538.5,418.5 538.1,414.0 541.7,411.4 542.7,407.0 546.7,405.3 549.4,402.0 553.5,401.2 557.1,399.0 561.3,400.0 565.3,397.8 569.0,400.2 573.3,399.6 576.5,402.4 580.9,403.0 582.8,407.0 586.6,408.9 588.2,412.7 591.0,415.8 591.3,420.0" fill="#fcc419"/>
<circle cx="564.3" cy="427" r="24.2" fill="#9e9e9e" stroke="#080808" stroke-width="2.56"/>
<ellipse cx="551.1" cy="416.3" rx="4.3" ry="4.3" fill="none" stroke="#111" stroke-width="1.28" transform="rotate(-12 551.1 416.3)"/>
<ellipse cx="567.3" cy="410.8" rx="3.6" ry="2.3" fill="none" stroke="#111" stroke-width="1.28" transform="rotate(-12 567.3 410.8)"/>
<ellipse cx="581.1" cy="418.2" rx="1.8" ry="2.3" fill="none" stroke="#111" stroke-width="1.28" transform="rotate(-12 581.1 418.2)"/>
<ellipse cx="545.1" cy="431.9" rx="2.0" ry="2.5" fill="none" stroke="#111" stroke-width="1.28" transform="rotate(-12 545.1 431.9)"/>
<ellipse cx="560.8" cy="434.8" rx="2.8" ry="2.8" fill="none" stroke="#111" stroke-width="1.28" transform="rotate(-12 560.8 434.8)"/>
<ellipse cx="580.2" cy="435.8" rx="3.3" ry="3.6" fill="none" stroke="#111" stroke-width="1.28" transform="rotate(-12 580.2 435.8)"/>
<ellipse cx="561.2" cy="446.4" rx="3.6" ry="2.5" fill="none" stroke="#111" stroke-width="1.28" transform="rotate(-12 561.2 446.4)"/>
<polygon points="1022.0,365.8 1018.9,368.1 1020.0,372.0 1016.4,373.4 1016.1,377.1 1012.8,378.2 1012.2,382.4 1008.2,382.1 1006.3,385.4 1002.4,383.6 999.8,386.8 996.5,384.6 993.4,386.4 990.7,383.7 987.1,385.1 984.7,382.8 980.9,382.9 979.6,379.3 975.9,378.6 976.2,374.3 972.6,372.9 972.8,369.4 969.6,367.1 970.9,363.6 968.5,360.6 971.8,357.6 969.5,354.1 972.3,351.6 971.8,348.0 975.6,346.6 975.4,342.6 979.5,342.2 979.8,337.6 983.7,337.8 985.9,334.9 989.6,336.3 992.1,332.7 995.5,335.0 998.7,332.6 1001.5,335.3 1005.0,334.5 1007.0,337.8 1010.9,337.3 1012.0,341.1 1015.5,342.0 1015.9,345.6 1020.0,346.7 1018.5,350.9 1021.5,353.1 1020.8,356.4 1022.7,359.4 1020.8,362.5" fill="#f7931e"/>
<polygon points="1018.0,367.3 1015.6,369.8 1015.4,373.5 1012.0,374.8 1010.6,378.0 1007.1,378.7 1005.0,381.6 1001.4,381.2 998.5,383.0 995.2,382.2 991.9,382.7 989.1,380.9 985.5,381.1 983.6,377.8 980.4,376.8 979.0,373.7 975.8,372.0 975.6,368.5 973.7,365.7 974.2,362.4 973.0,359.2 974.4,356.1 974.3,352.8 976.2,350.1 976.6,346.6 979.6,344.8 981.3,341.8 984.6,340.8 987.2,338.9 990.6,338.8 993.4,336.5 996.8,337.8 1000.1,337.2 1003.0,338.8 1006.4,339.1 1008.7,341.7 1011.7,343.1 1012.9,346.3 1015.9,348.1 1016.1,351.7 1018.4,354.2 1018.3,357.6 1019.1,360.8 1017.3,363.8" fill="#fcc419"/>
<circle cx="996" cy="360" r="19.3" fill="#9e9e9e" stroke="#080808" stroke-width="2.05"/>
<ellipse cx="990.0" cy="347.8" rx="3.5" ry="3.5" fill="none" stroke="#111" stroke-width="1.02" transform="rotate(13 990.0 347.8)"/>
<ellipse cx="1003.6" cy="349.2" rx="2.8" ry="1.8" fill="none" stroke="#111" stroke-width="1.02" transform="rotate(13 1003.6 349.2)"/>
<ellipse cx="1011.1" cy="359.2" rx="1.4" ry="1.8" fill="none" stroke="#111" stroke-width="1.02" transform="rotate(13 1011.1 359.2)"/>
<ellipse cx="980.4" cy="357.1" rx="1.6" ry="2.0" fill="none" stroke="#111" stroke-width="1.02" transform="rotate(13 980.4 357.1)"/>
<ellipse cx="990.8" cy="364.5" rx="2.2" ry="2.2" fill="none" stroke="#111" stroke-width="1.02" transform="rotate(13 990.8 364.5)"/>
<ellipse cx="1004.6" cy="371.7" rx="2.6" ry="2.8" fill="none" stroke="#111" stroke-width="1.02" transform="rotate(13 1004.6 371.7)"/>
<ellipse cx="987.3" cy="373.0" rx="2.8" ry="2.0" fill="none" stroke="#111" stroke-width="1.02" transform="rotate(13 987.3 373.0)"/>
<polygon points="922.9,488.4 919.1,490.3 918.7,494.7 914.6,495.7 913.0,499.5 908.8,499.5 905.9,502.0 902.0,501.3 899.0,504.9 895.2,502.3 891.4,504.7 888.6,500.6 884.3,502.2 882.2,498.3 877.7,498.7 876.4,494.7 872.8,493.2 872.3,489.1 868.5,487.3 868.4,483.4 865.3,480.6 867.9,476.5 864.5,473.1 868.0,469.8 865.8,465.7 869.8,463.3 869.3,459.2 872.1,456.7 873.3,453.1 877.5,452.3 878.3,447.4 882.7,447.7 885.4,444.9 889.2,445.2 892.5,442.9 896.2,444.9 899.9,443.5 903.1,445.5 907.2,444.7 909.7,448.1 913.9,448.1 914.7,452.8 918.9,453.7 919.0,458.1 922.8,460.0 921.9,464.2 925.5,466.8 924.1,470.6 925.8,474.1 924.1,477.5 925.3,481.4 921.9,484.0" fill="#f7931e"/>
<polygon points="917.1,488.2 913.6,490.0 911.8,493.3 908.2,494.4 905.7,497.4 901.8,496.8 898.7,499.5 895.0,497.5 891.3,499.1 888.1,497.0 884.5,496.3 881.9,493.8 878.4,492.4 876.8,489.0 874.1,486.6 873.7,482.9 871.1,480.1 871.2,476.4 870.3,472.9 871.6,469.4 871.0,465.6 873.6,462.7 874.6,459.2 877.9,457.2 879.5,453.7 883.0,452.6 885.8,450.3 889.5,449.9 892.8,447.9 896.4,449.0 900.0,448.7 903.3,450.2 906.9,450.9 909.3,453.7 913.1,454.6 914.8,458.0 917.6,460.4 918.4,464.0 920.5,467.1 919.7,470.9 921.2,474.3 919.4,477.7 919.8,481.4 917.2,484.2" fill="#fcc419"/>
<circle cx="895.7" cy="473.6" r="21.3" fill="#9e9e9e" stroke="#080808" stroke-width="2.26"/>
<ellipse cx="893.0" cy="458.9" rx="3.8" ry="3.8" fill="none" stroke="#111" stroke-width="1.13" transform="rotate(29 893.0 458.9)"/>
<ellipse cx="907.1" cy="464.5" rx="3.1" ry="2.0" fill="none" stroke="#111" stroke-width="1.13" transform="rotate(29 907.1 464.5)"/>
<ellipse cx="912.0" cy="477.4" rx="1.6" ry="2.0" fill="none" stroke="#111" stroke-width="1.13" transform="rotate(29 912.0 477.4)"/>
<ellipse cx="880.0" cy="465.8" rx="1.8" ry="2.2" fill="none" stroke="#111" stroke-width="1.13" transform="rotate(29 880.0 465.8)"/>
<ellipse cx="888.9" cy="476.8" rx="2.5" ry="2.5" fill="none" stroke="#111" stroke-width="1.13" transform="rotate(29 888.9 476.8)"/>
<ellipse cx="901.3" cy="488.6" rx="2.9" ry="3.1" fill="none" stroke="#111" stroke-width="1.13" transform="rotate(29 901.3 488.6)"/>
<ellipse cx="882.5" cy="484.7" rx="3.1" ry="2.2" fill="none" stroke="#111" stroke-width="1.13" transform="rotate(29 882.5 484.7)"/>
<g transform="translate(749,413)">
<path d="M-19.5 56 C-27 58.5 -32.8 64.5 -32.8 70.5 L-26.8 83.8 C-24 78 -19.5 74.5 -14 72.7 Z" fill="#4b80b4"/>
<path d="M19.8 56 C27.3 58.5 33 64.5 33 70.5 L27 83.8 C24.2 78 19.7 74.5 14.2 72.7 Z" fill="#4b80b4"/>
<polygon points="-26.9,62.4 -24.6,65.0 -21.0,64.7 -22.8,67.8 -21.4,71.0 -24.9,70.3 -27.6,72.6 -28.0,69.1 -31.0,67.3 -27.8,65.8" fill="#f2c744"/>
<polygon points="27.1,62.4 28.0,65.8 31.2,67.3 28.2,69.1 27.8,72.6 25.1,70.3 21.6,71.0 23.0,67.8 21.2,64.7 24.8,65.0" fill="#f2c744"/>
<path d="M0 0.6 C3 0.6 7.5 5.5 11 13 C16 23.5 20.6 35 20.6 48 C20.6 50 20.5 52 20.3 53.5 L-20 53.5 C-20.2 52 -20.3 50 -20.3 48 C-20.3 35 -16 23.5 -11.3 13 C-7.8 5.5 -3 0.6 0 0.6Z" fill="#d9dadc"/>
<path d="M-20 53.5 L20.3 53.5 C19.4 62.5 15.5 71.5 10 76.8 L-9.8 76.8 C-15.3 71.5 -19.1 62.5 -20 53.5Z" fill="#8d8d8d"/>
<path d="M-20.1 52.6 H20.4 V54.3 H-20.1Z" fill="#ececee"/>
<path d="M0 0.6 C3 0.6 7.5 5.5 10.6 12.6 L-11 12.6 C-7.8 5.5 -3 0.6 0 0.6Z" fill="#5d6472"/>
<path d="M1.8 4.2 A3.6 3.6 0 1 0 4.5 10.2 A3 3 0 0 1 1.8 4.2Z" fill="#f2c744" transform="translate(-3,-1)"/>
<circle cx="-0.2" cy="31.6" r="13.1" fill="#e9e9ec" stroke="#1a1a1a" stroke-width="1.1"/>
<circle cx="-0.2" cy="31.6" r="9.8" fill="#ffd966"/>
<path d="M-4.6 77 V66 C-4.6 59.6 4.4 59.6 4.4 66 V77 Z" fill="#a7adbd" stroke="#5a1d1d" stroke-width="1.3"/>
<path d="M-6 77.3 C-12.8 84 -11.8 93 -6.6 96 L0.2 108 L6.8 96 C11.8 93 12.8 84 6 77.3Z" fill="#e8702a"/>
<path d="M-3.6 77.5 C-6.5 84 -5 90 -2.5 92.5 L0 98 L2.5 92.5 C5 90 6.5 84 3.6 77.5Z" fill="#fbc02d"/>
<path d="M-2 77.5 C-3 82 -2 86 0 88 C2 86 3 82 2 77.5Z" fill="#ffe97a"/>
</g>
</svg>
<div style="left:1318px;top:64px;width:282px;height:792px;background:#2d2d2d;"></div>
<div style="left:1318px;top:64px;width:275px;height:36.5px;background:#323232;"></div>
<div style="left:1593px;top:64px;width:7px;height:792px;background:#2b2b2b;"></div>
<div style="left:1594.2px;top:74.2px;width:7px;height:708.3px;background:#4e4e4e;border-radius:3px"></div>
<svg style="left:1594.5px;top:67px;" width="5" height="4" viewBox="0 0 5 4"><path d="M0 4 H5 L2.5 0.6 Z" fill="#bdbdbd"/></svg>
<svg style="left:1594.5px;top:849px;" width="5" height="4" viewBox="0 0 5 4"><path d="M0 0 H5 L2.5 3.4 Z" fill="#bdbdbd"/></svg>
<svg style="left:1322.5px;top:70.5px;" width="13" height="13" viewBox="0 0 16 16"><path d="M8 1.2 L13.8 4.3 V11.7 L8 14.8 L2.2 11.7 V4.3 Z M2.4 4.4 L8 7.5 L13.6 4.4 M8 7.5 V14.6" fill="none" stroke="#707070" stroke-width="0.9" stroke-linejoin="round"/></svg>
<svg style="left:1334.8px;top:82.8px;" width="4" height="3" viewBox="0 0 10 6"><path d="M0 0 H10 L5 6 Z" fill="#c0c0c0"/></svg>
<div style="left:1346.2px;top:70.8px;width:8.4px;height:8.4px;background:#1b1b1b;border-radius:1.5px"></div>
<svg style="left:1346.4px;top:71px;" width="8" height="8" viewBox="0 0 8 8"><path d="M1.6 4.2 L3.3 5.9 L6.6 2" fill="none" stroke="#e4e4e4" stroke-width="1.1"/></svg>
<div style="left:1359.2px;top:69.05px;width:183px;height:11.5px;background:#1e1e1e;border-radius:1.5px;box-shadow:inset 0 0.9px 0 #131313"></div>
<div class="t in" style="left:1360.6px;top:71px;color:#d8d8d8;font-size:8px">PlayerCharacter</div>
<div style="left:1544.3px;top:70.8px;width:8.5px;height:8.5px;background:#222222;border-radius:1.5px"></div>
<div class="t in" style="left:1555.5px;top:71px;color:#969696">Static</div>
<svg style="left:1583.75px;top:73.5px;" width="4.5" height="3" viewBox="0 0 10 6"><path d="M0 0 H10 L5 6 Z" fill="#c0c0c0"/></svg>
<div class="t in" style="left:1344px;top:86px;color:#aaa">Tag</div>
<div style="left:1359px;top:84.7px;width:102.5px;height:10px;background:#444444;border-radius:1.5px;box-shadow:0 1px 0 #1e1e1e"></div>
<div class="t in" style="left:1360.8px;top:86px;color:#c0c0c0">Player</div>
<svg style="left:1453.75px;top:88.7px;" width="4.5" height="3" viewBox="0 0 10 6"><path d="M0 0 H10 L5 6 Z" fill="#c8c8c8"/></svg>
<div class="t in" style="left:1470.5px;top:86px;color:#aaa">Layer</div>
<div style="left:1493px;top:84.7px;width:96px;height:10px;background:#444444;border-radius:1.5px;box-shadow:0 1px 0 #1e1e1e"></div>
<div class="t in" style="left:1494.8px;top:86px;color:#c0c0c0">Default</div>
<svg style="left:1581.25px;top:88.7px;" width="4.5" height="3" viewBox="0 0 10 6"><path d="M0 0 H10 L5 6 Z" fill="#c8c8c8"/></svg>
<div style="left:1318px;top:100.8px;width:275px;height:0.9px;background:#222222;"></div>
<div style="left:1318px;top:101.7px;width:275px;height:12.6px;background:#313131;"></div>
<div style="left:1318px;top:114.3px;width:275px;height:0.6px;background:#292929;"></div>
<svg style="left:1321.8px;top:105.7px;" width="5" height="5" viewBox="0 0 10 10"><path d="M0 1 H10 L5 8 Z" fill="#7d7d7d"/></svg>
<svg style="left:1331.0px;top:103.2px;" width="9" height="9" viewBox="0 0 9 9"><path d="M4.5 4.8 V0.8" stroke="#b7e05a" stroke-width="1.2"/><path d="M4.5 4.8 L1 7.6" stroke="#5ab8e0" stroke-width="1.2"/><path d="M4.5 4.8 L8 7.6" stroke="#e0603a" stroke-width="1.2"/><circle cx="4.5" cy="4.8" r="1" fill="#ddd"/></svg>
<div class="t b in" style="left:1355.5px;top:103px;color:#d2d2d2">Transform</div>
<svg style="left:1555.5px;top:104.0px;" width="7.4" height="7.4" viewBox="0 0 7.4 7.4"><circle cx="3.7" cy="3.7" r="3.4" fill="#c4c4c4"/><path d="M2.6 2.9 A1.15 1.15 0 1 1 3.7 4.1 V4.7" fill="none" stroke="#313131" stroke-width="0.8"/><rect x="3.3" y="5.2" width="0.8" height="0.8" fill="#313131"/></svg>
<svg style="left:1568px;top:103.7px;" width="8" height="8" viewBox="0 0 8 8"><path d="M0.6 2.3 H7.4 M0.6 5.7 H7.4" stroke="#c4c4c4" stroke-width="0.8"/><rect x="4.4" y="0.9" width="1.6" height="2.8" fill="#c4c4c4"/><rect x="1.8" y="4.3" width="1.6" height="2.8" fill="#c4c4c4"/></svg>
<svg style="left:1583.3px;top:103.7px;" width="2" height="8" viewBox="0 0 2 8"><circle cx="1" cy="1" r="0.8" fill="#bdbdbd"/><circle cx="1" cy="4" r="0.8" fill="#bdbdbd"/><circle cx="1" cy="7" r="0.8" fill="#bdbdbd"/></svg>
<div class="t in" style="left:1330px;top:118px;color:#adadad">Position</div>
<div class="t in" style="left:1433.8px;top:118px;color:#adadad">X</div>
<div style="left:1442.5px;top:117.2px;width:41px;height:11px;background:#1e1e1e;border-radius:1.5px;box-shadow:inset 0 0.9px 0 #131313"></div>
<div class="t in" style="left:1444.1px;top:118px;color:#c0c0c0">-4.48</div>
<div class="t in" style="left:1487px;top:118px;color:#adadad">Y</div>
<div style="left:1496px;top:117.2px;width:40.5px;height:11px;background:#1e1e1e;border-radius:1.5px;box-shadow:inset 0 0.9px 0 #131313"></div>
<div class="t in" style="left:1497.6px;top:118px;color:#c0c0c0">-1.84</div>
<div class="t in" style="left:1540px;top:118px;color:#adadad">Z</div>
<div style="left:1549px;top:117.2px;width:40.5px;height:11px;background:#1e1e1e;border-radius:1.5px;box-shadow:inset 0 0.9px 0 #131313"></div>
<div class="t in" style="left:1550.6px;top:118px;color:#c0c0c0">0</div>
<div class="t in" style="left:1330px;top:131px;color:#adadad">Rotation</div>
<div class="t in" style="left:1433.8px;top:131px;color:#adadad">X</div>
<div style="left:1442.5px;top:129.7px;width:41px;height:11px;background:#1e1e1e;border-radius:1.5px;box-shadow:inset 0 0.9px 0 #131313"></div>
<div class="t in" style="left:1444.1px;top:131px;color:#c0c0c0">0</div>
<div class="t in" style="left:1487px;top:131px;color:#adadad">Y</div>
<div style="left:1496px;top:129.7px;width:40.5px;height:11px;background:#1e1e1e;border-radius:1.5px;box-shadow:inset 0 0.9px 0 #131313"></div>
<div class="t in" style="left:1497.6px;top:131px;color:#c0c0c0">0</div>
<div class="t in" style="left:1540px;top:131px;color:#adadad">Z</div>
<div style="left:1549px;top:129.7px;width:40.5px;height:11px;background:#1e1e1e;border-radius:1.5px;box-shadow:inset 0 0.9px 0 #131313"></div>
<div class="t in" style="left:1550.6px;top:131px;color:#c0c0c0">0</div>
<div class="t in" style="left:1330px;top:143px;color:#adadad">Scale</div>
<div class="t in" style="left:1433.8px;top:143px;color:#adadad">X</div>
<div style="left:1442.5px;top:142.2px;width:41px;height:11px;background:#1e1e1e;border-radius:1.5px;box-shadow:inset 0 0.9px 0 #131313"></div>
<div class="t in" style="left:1444.1px;top:143px;color:#c0c0c0">1</div>
<div class="t in" style="left:1487px;top:143px;color:#adadad">Y</div>
<div style="left:1496px;top:142.2px;width:40.5px;height:11px;background:#1e1e1e;border-radius:1.5px;box-shadow:inset 0 0.9px 0 #131313"></div>
<div class="t in" style="left:1497.6px;top:143px;color:#c0c0c0">1</div>
<div class="t in" style="left:1540px;top:143px;color:#adadad">Z</div>
<div style="left:1549px;top:142.2px;width:40.5px;height:11px;background:#1e1e1e;border-radius:1.5px;box-shadow:inset 0 0.9px 0 #131313"></div>
<div class="t in" style="left:1550.6px;top:143px;color:#c0c0c0">1</div>
<svg style="left:1420px;top:144px;" width="8" height="7" viewBox="0 0 8 7"><path d="M3.4 2.2 H2.6 A1.6 1.6 0 0 0 2.6 5.4 H3.4 M4.8 2.2 H5.6 A1.6 1.6 0 0 1 5.6 5.4 H4.8" fill="none" stroke="#c4c4c4" stroke-width="0.8"/><path d="M1 0.8 L7 6.6" stroke="#c4c4c4" stroke-width="0.8"/></svg>
<div style="left:1318px;top:158.6px;width:275px;height:0.9px;background:#222222;"></div>
<div style="left:1318px;top:159.5px;width:275px;height:12.6px;background:#313131;"></div>
<div style="left:1318px;top:172.1px;width:275px;height:0.6px;background:#292929;"></div>
<svg style="left:1321.8px;top:163.5px;" width="5" height="5" viewBox="0 0 10 10"><path d="M0 1 H10 L5 8 Z" fill="#7d7d7d"/></svg>
<svg style="left:1331.0px;top:161.0px;" width="9" height="9" viewBox="0 0 9 9"><path d="M0.6 2.4 V0.6 H2.4 M6.6 0.6 H8.4 V2.4 M8.4 6.6 V8.4 H6.6 M2.4 8.4 H0.6 V6.6" fill="none" stroke="#c4c4c4" stroke-width="0.8"/><path d="M2.5 0.6 H6.5 M2.5 8.4 H6.5 M0.6 2.5 V6.5 M8.4 2.5 V6.5" stroke="#888" stroke-width="0.5"/><circle cx="4.5" cy="3.4" r="1.5" fill="#8e7cc3"/><path d="M2.4 7.2 C2.4 4.6 6.6 4.6 6.6 7.2 Z" fill="#8e7cc3"/></svg>
<div style="left:1343.1px;top:161.3px;width:8.4px;height:8.4px;background:#1b1b1b;border-radius:1.5px"></div>
<svg style="left:1343.3px;top:161.5px;" width="8" height="8" viewBox="0 0 8 8"><path d="M1.6 4.2 L3.3 5.9 L6.6 2" fill="none" stroke="#e4e4e4" stroke-width="1.1"/></svg>
<div class="t b in" style="left:1355.5px;top:161px;color:#d2d2d2">Sprite Renderer</div>
<svg style="left:1555.5px;top:161.8px;" width="7.4" height="7.4" viewBox="0 0 7.4 7.4"><circle cx="3.7" cy="3.7" r="3.4" fill="#c4c4c4"/><path d="M2.6 2.9 A1.15 1.15 0 1 1 3.7 4.1 V4.7" fill="none" stroke="#313131" stroke-width="0.8"/><rect x="3.3" y="5.2" width="0.8" height="0.8" fill="#313131"/></svg>
<svg style="left:1568px;top:161.5px;" width="8" height="8" viewBox="0 0 8 8"><path d="M0.6 2.3 H7.4 M0.6 5.7 H7.4" stroke="#c4c4c4" stroke-width="0.8"/><rect x="4.4" y="0.9" width="1.6" height="2.8" fill="#c4c4c4"/><rect x="1.8" y="4.3" width="1.6" height="2.8" fill="#c4c4c4"/></svg>
<svg style="left:1583.3px;top:161.5px;" width="2" height="8" viewBox="0 0 2 8"><circle cx="1" cy="1" r="0.8" fill="#bdbdbd"/><circle cx="1" cy="4" r="0.8" fill="#bdbdbd"/><circle cx="1" cy="7" r="0.8" fill="#bdbdbd"/></svg>
<div class="t in" style="left:1330px;top:176px;color:#adadad">Sprite</div>
<div style="left:1433.5px;top:175.0px;width:155.5px;height:11px;background:#1e1e1e;border-radius:1.5px;box-shadow:inset 0 0.9px 0 #131313"></div>
<div style="left:1577.5px;top:175.9px;width:11px;height:9.6px;background:#2a2a2a;border-radius:0 1.5px 1.5px 0"></div>
<svg style="left:1579.5px;top:177.0px;" width="7" height="7" viewBox="0 0 7 7"><circle cx="3.5" cy="3.5" r="2.7" fill="none" stroke="#c4c4c4" stroke-width="0.8"/><circle cx="3.5" cy="3.5" r="1" fill="#c4c4c4"/></svg>
<svg style="left:1435.3px;top:177.0px;" width="7" height="7" viewBox="0 0 7 7"><path d="M0.5 2 V0.5 H2 M5 0.5 H6.5 V2 M6.5 5 V6.5 H5 M2 6.5 H0.5 V5" fill="none" stroke="#c4c4c4" stroke-width="0.7"/><circle cx="3.5" cy="3.5" r="1.5" fill="#8e7cc3"/></svg>
<div class="t in" style="left:1443.0px;top:176px;color:#c0c0c0">character_0</div>
<div style="left:1330px;top:188.3px;width:259px;height:10.4px;background:#484848;border-radius:1.5px;box-shadow:0 1px 0 #1e1e1e"></div>
<div class="t in" style="left:1330px;top:189px;width:259px;text-align:center;color:#d4d4d4">Open Sprite Editor</div>
<div class="t in" style="left:1330px;top:205px;color:#adadad">Color</div>
<div style="left:1433.7px;top:204.4px;width:144.2px;height:10px;background:#ffffff;"></div>
<div style="left:1579.3px;top:204px;width:9.8px;height:10.6px;background:#202020;border-radius:1.5px"></div>
<svg style="left:1580.6px;top:205.4px;" width="7" height="8" viewBox="0 0 8 9"><path d="M1 8 L1.6 6 L5 2.6 L6.4 4 L3 7.4 Z" fill="#a8a8a8"/><path d="M4.8 1.4 L6.2 0.4 L8 2.2 L7 3.6 Z" fill="#a8a8a8"/></svg>
<div class="t in" style="left:1330px;top:218px;color:#adadad">Flip</div>
<div style="left:1433.8px;top:217.8px;width:8.4px;height:8.4px;background:#212121;border-radius:1.5px;box-shadow:inset 0 0.7px 0 #141414"></div>
<div class="t in" style="left:1444.5px;top:218px;color:#adadad">X</div>
<div style="left:1452.8px;top:217.8px;width:8.4px;height:8.4px;background:#212121;border-radius:1.5px;box-shadow:inset 0 0.7px 0 #141414"></div>
<div class="t in" style="left:1463.5px;top:218px;color:#adadad">Y</div>
<div class="t in" style="left:1330px;top:230px;color:#adadad">Draw Mode</div>
<div style="left:1433.8px;top:229.2px;width:155px;height:10px;background:#444444;border-radius:1.5px;box-shadow:0 1px 0 #1e1e1e"></div>
<div class="t in" style="left:1435.6px;top:230px;color:#c0c0c0">Simple</div>
<svg style="left:1581.05px;top:233.2px;" width="4.5" height="3" viewBox="0 0 10 6"><path d="M0 0 H10 L5 6 Z" fill="#c8c8c8"/></svg>
<div class="t in" style="left:1330px;top:243px;color:#adadad">Mask Interaction</div>
<div style="left:1433.8px;top:241.7px;width:155px;height:10px;background:#444444;border-radius:1.5px;box-shadow:0 1px 0 #1e1e1e"></div>
<div class="t in" style="left:1435.6px;top:243px;color:#c0c0c0">None</div>
<svg style="left:1581.05px;top:245.7px;" width="4.5" height="3" viewBox="0 0 10 6"><path d="M0 0 H10 L5 6 Z" fill="#c8c8c8"/></svg>
<div class="t in" style="left:1330px;top:255px;color:#adadad">Sprite Sort Point</div>
<div style="left:1433.8px;top:254.2px;width:155px;height:10px;background:#444444;border-radius:1.5px;box-shadow:0 1px 0 #1e1e1e"></div>
<div class="t in" style="left:1435.6px;top:255px;color:#c0c0c0">Center</div>
<svg style="left:1581.05px;top:258.2px;" width="4.5" height="3" viewBox="0 0 10 6"><path d="M0 0 H10 L5 6 Z" fill="#c8c8c8"/></svg>
<div class="t in" style="left:1330px;top:268px;color:#adadad">Material</div>
<div style="left:1433.5px;top:266.5px;width:155.5px;height:11px;background:#1e1e1e;border-radius:1.5px;box-shadow:inset 0 0.9px 0 #131313"></div>
<div style="left:1577.5px;top:267.4px;width:11px;height:9.6px;background:#2a2a2a;border-radius:0 1.5px 1.5px 0"></div>
<svg style="left:1579.5px;top:268.5px;" width="7" height="7" viewBox="0 0 7 7"><circle cx="3.5" cy="3.5" r="2.7" fill="none" stroke="#c4c4c4" stroke-width="0.8"/><circle cx="3.5" cy="3.5" r="1" fill="#c4c4c4"/></svg>
<svg style="left:1435.3px;top:268.5px;" width="7" height="7" viewBox="0 0 7 7"><circle cx="3.5" cy="3.5" r="2.7" fill="#3f7fb5"/><circle cx="2.9" cy="2.8" r="1.1" fill="#9fd0f0"/></svg>
<div class="t in" style="left:1443.0px;top:268px;color:#c0c0c0">Sprites-Default</div>
<svg style="left:1321.8px;top:282.5px;" width="5" height="5" viewBox="0 0 10 10"><path d="M0 1 H10 L5 8 Z" fill="#7d7d7d"/></svg>
<div class="t b in" style="left:1330.5px;top:280px;color:#cfcfcf">Additional Settings</div>
<div class="t in" style="left:1339.5px;top:293px;color:#adadad">Sorting Layer</div>
<div style="left:1433.8px;top:291.7px;width:155px;height:10px;background:#444444;border-radius:1.5px;box-shadow:0 1px 0 #1e1e1e"></div>
<div class="t in" style="left:1435.6px;top:293px;color:#c0c0c0">Characters</div>
<svg style="left:1581.05px;top:295.7px;" width="4.5" height="3" viewBox="0 0 10 6"><path d="M0 0 H10 L5 6 Z" fill="#c8c8c8"/></svg>
<div class="t in" style="left:1339.5px;top:305px;color:#adadad">Order in Layer</div>
<div style="left:1433.5px;top:304.0px;width:155.5px;height:11px;background:#1e1e1e;border-radius:1.5px;box-shadow:inset 0 0.9px 0 #131313"></div>
<div class="t in" style="left:1435.1px;top:305px;color:#c0c0c0">10</div>
<div style="left:1318px;top:320.6px;width:275px;height:0.9px;background:#222222;"></div>
<div style="left:1318px;top:321.5px;width:275px;height:12.6px;background:#313131;"></div>
<div style="left:1318px;top:334.1px;width:275px;height:0.6px;background:#292929;"></div>
<svg style="left:1321.8px;top:325.5px;" width="5" height="5" viewBox="0 0 10 10"><path d="M0 1 H10 L5 8 Z" fill="#7d7d7d"/></svg>
<svg style="left:1330.8px;top:322.8px;" width="9.4" height="9.4" viewBox="0 0 9.4 9.4"><circle cx="4.7" cy="4.7" r="4.3" fill="#96cc3c"/><path d="M4.7 4.7 V0.4 A4.3 4.3 0 0 1 9 4.7 Z M4.7 4.7 V9 A4.3 4.3 0 0 1 0.4 4.7 Z" fill="#2a2a2a"/><circle cx="4.7" cy="4.7" r="4.3" fill="none" stroke="#96cc3c" stroke-width="0.8"/></svg>
<div class="t b in" style="left:1355.5px;top:323px;color:#d2d2d2">Rigidbody 2D</div>
<svg style="left:1555.5px;top:323.8px;" width="7.4" height="7.4" viewBox="0 0 7.4 7.4"><circle cx="3.7" cy="3.7" r="3.4" fill="#c4c4c4"/><path d="M2.6 2.9 A1.15 1.15 0 1 1 3.7 4.1 V4.7" fill="none" stroke="#313131" stroke-width="0.8"/><rect x="3.3" y="5.2" width="0.8" height="0.8" fill="#313131"/></svg>
<svg style="left:1568px;top:323.5px;" width="8" height="8" viewBox="0 0 8 8"><path d="M0.6 2.3 H7.4 M0.6 5.7 H7.4" stroke="#c4c4c4" stroke-width="0.8"/><rect x="4.4" y="0.9" width="1.6" height="2.8" fill="#c4c4c4"/><rect x="1.8" y="4.3" width="1.6" height="2.8" fill="#c4c4c4"/></svg>
<svg style="left:1583.3px;top:323.5px;" width="2" height="8" viewBox="0 0 2 8"><circle cx="1" cy="1" r="0.8" fill="#bdbdbd"/><circle cx="1" cy="4" r="0.8" fill="#bdbdbd"/><circle cx="1" cy="7" r="0.8" fill="#bdbdbd"/></svg>
<div class="t in" style="left:1330px;top:338px;color:#adadad">Body Type</div>
<div style="left:1433.8px;top:337.2px;width:155px;height:10px;background:#444444;border-radius:1.5px;box-shadow:0 1px 0 #1e1e1e"></div>
<div class="t in" style="left:1435.6px;top:338px;color:#c0c0c0">Kinematic</div>
<svg style="left:1581.05px;top:341.2px;" width="4.5" height="3" viewBox="0 0 10 6"><path d="M0 0 H10 L5 6 Z" fill="#c8c8c8"/></svg>
<div class="t in" style="left:1330px;top:351px;color:#adadad">Material</div>
<div style="left:1433.5px;top:349.5px;width:155.5px;height:11px;background:#1e1e1e;border-radius:1.5px;box-shadow:inset 0 0.9px 0 #131313"></div>
<div style="left:1577.5px;top:350.4px;width:11px;height:9.6px;background:#2a2a2a;border-radius:0 1.5px 1.5px 0"></div>
<svg style="left:1579.5px;top:351.5px;" width="7" height="7" viewBox="0 0 7 7"><circle cx="3.5" cy="3.5" r="2.7" fill="none" stroke="#c4c4c4" stroke-width="0.8"/><circle cx="3.5" cy="3.5" r="1" fill="#c4c4c4"/></svg>
<div class="t in" style="left:1435.1px;top:351px;color:#8e8e8e">None (Physics Material 2D)</div>
<div class="t in" style="left:1330px;top:363px;color:#adadad">Simulated</div>
<div style="left:1433.8px;top:363.3px;width:8.4px;height:8.4px;background:#1b1b1b;border-radius:1.5px"></div>
<svg style="left:1434px;top:363.5px;" width="8" height="8" viewBox="0 0 8 8"><path d="M1.6 4.2 L3.3 5.9 L6.6 2" fill="none" stroke="#e4e4e4" stroke-width="1.1"/></svg>
<div class="t in" style="left:1330px;top:376px;color:#adadad">Use Full Kinematic Contacts</div>
<div style="left:1433.8px;top:375.8px;width:8.4px;height:8.4px;background:#212121;border-radius:1.5px;box-shadow:inset 0 0.7px 0 #141414"></div>
<div class="t in" style="left:1330px;top:388px;color:#adadad">Collision Detection</div>
<div style="left:1433.8px;top:387.2px;width:155px;height:10px;background:#444444;border-radius:1.5px;box-shadow:0 1px 0 #1e1e1e"></div>
<div class="t in" style="left:1435.6px;top:388px;color:#c0c0c0">Discrete</div>
<svg style="left:1581.05px;top:391.2px;" width="4.5" height="3" viewBox="0 0 10 6"><path d="M0 0 H10 L5 6 Z" fill="#c8c8c8"/></svg>
<div class="t in" style="left:1330px;top:401px;color:#adadad">Sleeping Mode</div>
<div style="left:1433.8px;top:399.7px;width:155px;height:10px;background:#444444;border-radius:1.5px;box-shadow:0 1px 0 #1e1e1e"></div>
<div class="t in" style="left:1435.6px;top:401px;color:#c0c0c0">Start Awake</div>
<svg style="left:1581.05px;top:403.7px;" width="4.5" height="3" viewBox="0 0 10 6"><path d="M0 0 H10 L5 6 Z" fill="#c8c8c8"/></svg>
<div class="t in" style="left:1330px;top:413px;color:#adadad">Interpolate</div>
<div style="left:1433.8px;top:412.2px;width:155px;height:10px;background:#444444;border-radius:1.5px;box-shadow:0 1px 0 #1e1e1e"></div>
<div class="t in" style="left:1435.6px;top:413px;color:#c0c0c0">None</div>
<svg style="left:1581.05px;top:416.2px;" width="4.5" height="3" viewBox="0 0 10 6"><path d="M0 0 H10 L5 6 Z" fill="#c8c8c8"/></svg>
<svg style="left:1322.0px;top:428.0px;" width="5" height="5" viewBox="0 0 10 10"><path d="M0 1 H10 L5 8 Z" fill="#7d7d7d"/></svg>
<div class="t in" style="left:1330px;top:426px;color:#adadad">Constraints</div>
<div class="t in" style="left:1339.5px;top:438px;color:#adadad">Freeze Position</div>
<div style="left:1433.8px;top:438.3px;width:8.4px;height:8.4px;background:#212121;border-radius:1.5px;box-shadow:inset 0 0.7px 0 #141414"></div>
<div class="t in" style="left:1444.5px;top:438px;color:#adadad">X</div>
<div style="left:1452.8px;top:438.3px;width:8.4px;height:8.4px;background:#212121;border-radius:1.5px;box-shadow:inset 0 0.7px 0 #141414"></div>
<div class="t in" style="left:1463.5px;top:438px;color:#adadad">Y</div>
<div class="t in" style="left:1339.5px;top:451px;color:#adadad">Freeze Rotation</div>
<div style="left:1433.8px;top:450.8px;width:8.4px;height:8.4px;background:#212121;border-radius:1.5px;box-shadow:inset 0 0.7px 0 #141414"></div>
<div class="t in" style="left:1444.5px;top:451px;color:#adadad">Z</div>
<svg style="left:1322.0px;top:465.5px;" width="5" height="5" viewBox="0 0 10 10"><path d="M0 1 H10 L5 8 Z" fill="#7d7d7d"/></svg>
<div class="t in" style="left:1330px;top:463px;color:#adadad">Layer Overrides</div>
<div class="t in" style="left:1339.5px;top:476px;color:#adadad">Include Layers</div>
<div style="left:1433.8px;top:474.7px;width:155px;height:10px;background:#444444;border-radius:1.5px;box-shadow:0 1px 0 #1e1e1e"></div>
<div class="t in" style="left:1435.6px;top:476px;color:#c0c0c0">Nothing</div>
<svg style="left:1581.05px;top:478.7px;" width="4.5" height="3" viewBox="0 0 10 6"><path d="M0 0 H10 L5 6 Z" fill="#c8c8c8"/></svg>
<div class="t in" style="left:1339.5px;top:488px;color:#adadad">Exclude Layers</div>
<div style="left:1433.8px;top:487.2px;width:155px;height:10px;background:#444444;border-radius:1.5px;box-shadow:0 1px 0 #1e1e1e"></div>
<div class="t in" style="left:1435.6px;top:488px;color:#c0c0c0">Nothing</div>
<svg style="left:1581.05px;top:491.2px;" width="4.5" height="3" viewBox="0 0 10 6"><path d="M0 0 H10 L5 6 Z" fill="#c8c8c8"/></svg>
<svg style="left:1322.0px;top:503.0px;" width="5" height="5" viewBox="0 0 10 10"><path d="M0 1 H10 L5 8 Z" fill="#7d7d7d"/></svg>
<div class="t in" style="left:1330px;top:501px;color:#adadad">Info</div>
<div class="t in" style="left:1331.5px;top:513px;color:#6a6a6a">Position</div>
<div class="t in" style="left:1435.5px;top:513px;color:#6a6a6a">X</div>
<div style="left:1444px;top:512.0px;width:40.5px;height:11px;background:#262626;border-radius:1.5px;box-shadow:inset 0 0.9px 0 #131313"></div>
<div class="t in" style="left:1445.6px;top:513px;color:#5c5c5c">-4.48</div>
<div class="t in" style="left:1488px;top:513px;color:#6a6a6a">Y</div>
<div style="left:1497px;top:512.0px;width:40px;height:11px;background:#262626;border-radius:1.5px;box-shadow:inset 0 0.9px 0 #131313"></div>
<div class="t in" style="left:1498.6px;top:513px;color:#5c5c5c">-1.84</div>
<div class="t in" style="left:1331.5px;top:526px;color:#6a6a6a">Rotation</div>
<div style="left:1436px;top:524.5px;width:153px;height:11px;background:#262626;border-radius:1.5px;box-shadow:inset 0 0.9px 0 #131313"></div>
<div class="t in" style="left:1437.6px;top:526px;color:#5c5c5c">0</div>
<div class="t in" style="left:1331.5px;top:538px;color:#6a6a6a">Linear Velocity</div>
<div class="t in" style="left:1435.5px;top:538px;color:#6a6a6a">X</div>
<div style="left:1444px;top:537.0px;width:40.5px;height:11px;background:#262626;border-radius:1.5px;box-shadow:inset 0 0.9px 0 #131313"></div>
<div class="t in" style="left:1445.6px;top:538px;color:#5c5c5c">0</div>
<div class="t in" style="left:1488px;top:538px;color:#6a6a6a">Y</div>
<div style="left:1497px;top:537.0px;width:40px;height:11px;background:#262626;border-radius:1.5px;box-shadow:inset 0 0.9px 0 #131313"></div>
<div class="t in" style="left:1498.6px;top:538px;color:#5c5c5c">0</div>
<div class="t in" style="left:1331.5px;top:551px;color:#6a6a6a">Angular Velocity</div>
<div style="left:1436px;top:549.5px;width:153px;height:11px;background:#262626;border-radius:1.5px;box-shadow:inset 0 0.9px 0 #131313"></div>
<div class="t in" style="left:1437.6px;top:551px;color:#5c5c5c">0</div>
<div class="t in" style="left:1331.5px;top:563px;color:#6a6a6a">Inertia</div>
<div style="left:1436px;top:562.0px;width:153px;height:11px;background:#262626;border-radius:1.5px;box-shadow:inset 0 0.9px 0 #131313"></div>
<div class="t in" style="left:1437.6px;top:563px;color:#5c5c5c">0</div>
<div class="t in" style="left:1331.5px;top:576px;color:#6a6a6a">Local Center of Mass</div>
<div class="t in" style="left:1435.5px;top:576px;color:#6a6a6a">X</div>
<div style="left:1444px;top:574.5px;width:40.5px;height:11px;background:#262626;border-radius:1.5px;box-shadow:inset 0 0.9px 0 #131313"></div>
<div class="t in" style="left:1445.6px;top:576px;color:#5c5c5c">0</div>
<div class="t in" style="left:1488px;top:576px;color:#6a6a6a">Y</div>
<div style="left:1497px;top:574.5px;width:40px;height:11px;background:#262626;border-radius:1.5px;box-shadow:inset 0 0.9px 0 #131313"></div>
<div class="t in" style="left:1498.6px;top:576px;color:#5c5c5c">0</div>
<div class="t in" style="left:1331.5px;top:588px;color:#6a6a6a">World Center of Mass</div>
<div class="t in" style="left:1435.5px;top:588px;color:#6a6a6a">X</div>
<div style="left:1444px;top:587.0px;width:40.5px;height:11px;background:#262626;border-radius:1.5px;box-shadow:inset 0 0.9px 0 #131313"></div>
<div class="t in" style="left:1445.6px;top:588px;color:#5c5c5c">0</div>
<div class="t in" style="left:1488px;top:588px;color:#6a6a6a">Y</div>
<div style="left:1497px;top:587.0px;width:40px;height:11px;background:#262626;border-radius:1.5px;box-shadow:inset 0 0.9px 0 #131313"></div>
<div class="t in" style="left:1498.6px;top:588px;color:#5c5c5c">0</div>
<div class="t in" style="left:1331.5px;top:601px;color:#6a6a6a">Sleep State</div>
<div class="t in" style="left:1435.5px;top:601px;color:#6a6a6a">Awake</div>
<svg style="left:1332.0px;top:614.9px;" width="5" height="5.75" viewBox="0 0 10 10"><path d="M1 0 V10 L10 5 Z" fill="#6e6e6e"/></svg>
<div class="t in" style="left:1339.5px;top:613px;color:#adadad">Contacts</div>
<div style="left:1318px;top:627.6px;width:275px;height:0.9px;background:#222222;"></div>
<div style="left:1318px;top:628.5px;width:275px;height:12.6px;background:#313131;"></div>
<div style="left:1318px;top:641.1px;width:275px;height:0.6px;background:#292929;"></div>
<svg style="left:1321.8px;top:632.5px;" width="5" height="5" viewBox="0 0 10 10"><path d="M0 1 H10 L5 8 Z" fill="#7d7d7d"/></svg>
<svg style="left:1331.3px;top:630.3px;" width="8.4" height="8.4" viewBox="0 0 8.4 8.4"><rect x="0.7" y="0.7" width="7" height="7" fill="#2c3a18" stroke="#9ad23c" stroke-width="1.4"/><rect x="2.7" y="2.7" width="3" height="3" fill="#9ad23c"/></svg>
<div style="left:1343.1px;top:630.3px;width:8.4px;height:8.4px;background:#1b1b1b;border-radius:1.5px"></div>
<svg style="left:1343.3px;top:630.5px;" width="8" height="8" viewBox="0 0 8 8"><path d="M1.6 4.2 L3.3 5.9 L6.6 2" fill="none" stroke="#e4e4e4" stroke-width="1.1"/></svg>
<div class="t b in" style="left:1355.5px;top:630px;color:#d2d2d2">Box Collider 2D</div>
<svg style="left:1555.5px;top:630.8px;" width="7.4" height="7.4" viewBox="0 0 7.4 7.4"><circle cx="3.7" cy="3.7" r="3.4" fill="#c4c4c4"/><path d="M2.6 2.9 A1.15 1.15 0 1 1 3.7 4.1 V4.7" fill="none" stroke="#313131" stroke-width="0.8"/><rect x="3.3" y="5.2" width="0.8" height="0.8" fill="#313131"/></svg>
<svg style="left:1568px;top:630.5px;" width="8" height="8" viewBox="0 0 8 8"><path d="M0.6 2.3 H7.4 M0.6 5.7 H7.4" stroke="#c4c4c4" stroke-width="0.8"/><rect x="4.4" y="0.9" width="1.6" height="2.8" fill="#c4c4c4"/><rect x="1.8" y="4.3" width="1.6" height="2.8" fill="#c4c4c4"/></svg>
<svg style="left:1583.3px;top:630.5px;" width="2" height="8" viewBox="0 0 2 8"><circle cx="1" cy="1" r="0.8" fill="#bdbdbd"/><circle cx="1" cy="4" r="0.8" fill="#bdbdbd"/><circle cx="1" cy="7" r="0.8" fill="#bdbdbd"/></svg>
<div class="t in" style="left:1330px;top:645px;color:#adadad">Edit Collider</div>
<div style="left:1432.2px;top:645px;width:19.6px;height:12.4px;background:#171717;border-radius:2px"></div>
<svg style="left:1437px;top:647.5px;" width="10" height="8" viewBox="0 0 10 8"><path d="M1 7 L3.4 1.2 L7.6 5.2" fill="none" stroke="#d0d0d0" stroke-width="0.8"/><rect x="0.3" y="6" width="1.6" height="1.6" fill="#d0d0d0"/><rect x="2.6" y="0.4" width="1.6" height="1.6" fill="#d0d0d0"/><rect x="6.6" y="4.2" width="2" height="2" fill="none" stroke="#d0d0d0" stroke-width="0.6"/></svg>
<div class="t in" style="left:1330px;top:662px;color:#adadad">Material</div>
<div style="left:1433.5px;top:661.0px;width:155.5px;height:11px;background:#1e1e1e;border-radius:1.5px;box-shadow:inset 0 0.9px 0 #131313"></div>
<div style="left:1577.5px;top:661.9px;width:11px;height:9.6px;background:#2a2a2a;border-radius:0 1.5px 1.5px 0"></div>
<svg style="left:1579.5px;top:663.0px;" width="7" height="7" viewBox="0 0 7 7"><circle cx="3.5" cy="3.5" r="2.7" fill="none" stroke="#c4c4c4" stroke-width="0.8"/><circle cx="3.5" cy="3.5" r="1" fill="#c4c4c4"/></svg>
<div class="t in" style="left:1435.1px;top:662px;color:#8e8e8e">None (Physics Material 2D)</div>
<div class="t in" style="left:1330px;top:675px;color:#adadad">Is Trigger</div>
<div style="left:1433.8px;top:674.8px;width:8.4px;height:8.4px;background:#1b1b1b;border-radius:1.5px"></div>
<svg style="left:1434px;top:675px;" width="8" height="8" viewBox="0 0 8 8"><path d="M1.6 4.2 L3.3 5.9 L6.6 2" fill="none" stroke="#e4e4e4" stroke-width="1.1"/></svg>
<div class="t in" style="left:1330px;top:687px;color:#adadad">Used By Effector</div>
<div style="left:1433.8px;top:687.3px;width:8.4px;height:8.4px;background:#212121;border-radius:1.5px;box-shadow:inset 0 0.7px 0 #141414"></div>
<div class="t in" style="left:1330px;top:700px;color:#adadad">Auto Tiling</div>
<div style="left:1433.8px;top:699.8px;width:8.4px;height:8.4px;background:#272727;border-radius:1.5px"></div>
<div class="t in" style="left:1330px;top:712px;color:#adadad">Composite Operation</div>
<div style="left:1433.8px;top:711.2px;width:155px;height:10px;background:#444444;border-radius:1.5px;box-shadow:0 1px 0 #1e1e1e"></div>
<div class="t in" style="left:1435.6px;top:712px;color:#c0c0c0">None</div>
<svg style="left:1581.05px;top:715.2px;" width="4.5" height="3" viewBox="0 0 10 6"><path d="M0 0 H10 L5 6 Z" fill="#c8c8c8"/></svg>
<div class="t in" style="left:1330px;top:725px;color:#adadad">Offset</div>
<div class="t in" style="left:1433.8px;top:725px;color:#adadad">X</div>
<div style="left:1442.5px;top:723.5px;width:41px;height:11px;background:#1e1e1e;border-radius:1.5px;box-shadow:inset 0 0.9px 0 #131313"></div>
<div class="t in" style="left:1444.1px;top:725px;color:#c0c0c0">0</div>
<div class="t in" style="left:1487px;top:725px;color:#adadad">Y</div>
<div style="left:1496px;top:723.5px;width:40.5px;height:11px;background:#1e1e1e;border-radius:1.5px;box-shadow:inset 0 0.9px 0 #131313"></div>
<div class="t in" style="left:1497.6px;top:725px;color:#c0c0c0">0</div>
<div class="t in" style="left:1330px;top:737px;color:#adadad">Size</div>
<div class="t in" style="left:1433.8px;top:737px;color:#adadad">X</div>
<div style="left:1442.5px;top:736.0px;width:41px;height:11px;background:#1e1e1e;border-radius:1.5px;box-shadow:inset 0 0.9px 0 #131313"></div>
<div class="t in" style="left:1444.1px;top:737px;color:#c0c0c0">1</div>
<div class="t in" style="left:1487px;top:737px;color:#adadad">Y</div>
<div style="left:1496px;top:736.0px;width:40.5px;height:11px;background:#1e1e1e;border-radius:1.5px;box-shadow:inset 0 0.9px 0 #131313"></div>
<div class="t in" style="left:1497.6px;top:737px;color:#c0c0c0">1</div>
<div class="t in" style="left:1330px;top:750px;color:#adadad">Edge Radius</div>
<div style="left:1433.5px;top:748.5px;width:155.5px;height:11px;background:#1e1e1e;border-radius:1.5px;box-shadow:inset 0 0.9px 0 #131313"></div>
<div class="t in" style="left:1435.1px;top:750px;color:#c0c0c0">0</div>
<svg style="left:1322.0px;top:764.5px;" width="5" height="5" viewBox="0 0 10 10"><path d="M0 1 H10 L5 8 Z" fill="#7d7d7d"/></svg>
<div class="t in" style="left:1330px;top:762px;color:#adadad">Layer Overrides</div>
<div class="t in" style="left:1341.5px;top:775px;color:#adadad">Layer Override Priority</div>
<div style="left:1435.5px;top:773.5px;width:152px;height:11px;background:#1e1e1e;border-radius:1.5px;box-shadow:inset 0 0.9px 0 #131313"></div>
<div class="t in" style="left:1437.1px;top:775px;color:#c0c0c0">0</div>
<div class="t in" style="left:1341.5px;top:787px;color:#adadad">Include Layers</div>
<div style="left:1435.5px;top:786.2px;width:152px;height:10px;background:#444444;border-radius:1.5px;box-shadow:0 1px 0 #1e1e1e"></div>
<div class="t in" style="left:1437.3px;top:787px;color:#c0c0c0">Nothing</div>
<svg style="left:1579.75px;top:790.2px;" width="4.5" height="3" viewBox="0 0 10 6"><path d="M0 0 H10 L5 6 Z" fill="#c8c8c8"/></svg>
<div class="t in" style="left:1341.5px;top:800px;color:#adadad">Exclude Layers</div>
<div style="left:1435.5px;top:798.7px;width:152px;height:10px;background:#444444;border-radius:1.5px;box-shadow:0 1px 0 #1e1e1e"></div>
<div class="t in" style="left:1437.3px;top:800px;color:#c0c0c0">Nothing</div>
<svg style="left:1579.75px;top:802.7px;" width="4.5" height="3" viewBox="0 0 10 6"><path d="M0 0 H10 L5 6 Z" fill="#c8c8c8"/></svg>
<div class="t in" style="left:1341.5px;top:817px;color:#adadad">Contact Capture Layers</div>
<div style="left:1435.5px;top:815.9000000000001px;width:152px;height:10px;background:#444444;border-radius:1.5px;box-shadow:0 1px 0 #1e1e1e"></div>
<div class="t in" style="left:1437.3px;top:817px;color:#c0c0c0">Everything</div>
<svg style="left:1579.75px;top:819.9000000000001px;" width="4.5" height="3" viewBox="0 0 10 6"><path d="M0 0 H10 L5 6 Z" fill="#c8c8c8"/></svg>
<div class="t in" style="left:1341.5px;top:829px;color:#adadad">Callback Layers</div>
<div style="left:1435.5px;top:828.4000000000001px;width:152px;height:10px;background:#444444;border-radius:1.5px;box-shadow:0 1px 0 #1e1e1e"></div>
<div class="t in" style="left:1437.3px;top:829px;color:#c0c0c0">Everything</div>
<svg style="left:1579.75px;top:832.4000000000001px;" width="4.5" height="3" viewBox="0 0 10 6"><path d="M0 0 H10 L5 6 Z" fill="#c8c8c8"/></svg>
<svg style="left:1322.5px;top:843.9px;" width="5" height="5.75" viewBox="0 0 10 10"><path d="M1 0 V10 L10 5 Z" fill="#6e6e6e"/></svg>
<div class="t in" style="left:1330px;top:842px;color:#adadad">Info</div>
<div style="left:0px;top:669px;width:1316.5px;height:16px;background:#0f0f0f;"></div>
<div style="left:0px;top:669.5px;width:51px;height:15.5px;background:#323232;border-radius:2px 2px 0 0"></div>
<svg style="left:5.4px;top:673.9px;" width="7.8" height="6.8" viewBox="0 0 9 8"><path d="M0.2 0.6 H3.4 L4.4 1.8 H8.8 V7.6 H0.2 Z" fill="#c4c4c4"/></svg>
<div class="t tab" style="left:15.5px;top:673px;">Project</div>
<svg style="left:56.5px;top:674px;" width="8" height="7" viewBox="0 0 8 7"><rect x="0.3" y="0.3" width="7.4" height="6.4" rx="0.8" fill="#c4c4c4"/><rect x="1.2" y="2" width="5.6" height="3.8" fill="#101010"/><path d="M2 3 H4.4 M2 4.5 H5.6" stroke="#c4c4c4" stroke-width="0.6"/></svg>
<div class="t tab" style="left:66.5px;top:673px;">Console</div>
<svg style="left:111px;top:674px;" width="8" height="7" viewBox="0 0 8 7"><path d="M1 0.5 V6.5 M3.4 0.5 V6.5 M5.8 0.5 V6.5" stroke="#c4c4c4" stroke-width="0.8"/><path d="M1 1.5 L3.4 5 M4.8 3 H6.8" stroke="#c4c4c4" stroke-width="0.8"/><rect x="5.1" y="1" width="1.5" height="1.6" fill="#c4c4c4"/></svg>
<div class="t tab" style="left:121.5px;top:673px;">Audio Mixer</div>
<svg style="left:1294px;top:673.8px;" width="6" height="7.4" viewBox="0 0 6 7.4"><rect x="0.7" y="3.4" width="4.6" height="3.3" rx="0.5" fill="none" stroke="#bdbdbd" stroke-width="0.95"/><path d="M1.7 3.4 V2.1 A1.3 1.3 0 0 1 4.3 2.1" fill="none" stroke="#bdbdbd" stroke-width="0.85"/></svg>
<svg style="left:1307.5px;top:673.5px;" width="2" height="8" viewBox="0 0 2 8"><circle cx="1" cy="1" r="0.8" fill="#bdbdbd"/><circle cx="1" cy="4" r="0.8" fill="#bdbdbd"/><circle cx="1" cy="7" r="0.8" fill="#bdbdbd"/></svg>
<div style="left:0px;top:685px;width:1316.5px;height:13px;background:#303030;"></div>
<svg style="left:4px;top:687.5px;" width="7" height="7" viewBox="0 0 7 7"><path d="M3.5 0.3 V6.7 M0.3 3.5 H6.7" stroke="#c4c4c4" stroke-width="1.1"/></svg>
<svg style="left:14.5px;top:689.8px;" width="4" height="3" viewBox="0 0 10 6"><path d="M0 0 H10 L5 6 Z" fill="#c4c4c4"/></svg>
<div style="left:1025px;top:686px;width:200px;height:10.3px;background:#222222;border-radius:2px;box-shadow:inset 0 0.8px 0 #141414"></div>
<svg style="left:1027.0px;top:689.0px;" width="5" height="5" viewBox="0 0 8 8"><circle cx="3.3" cy="3.3" r="2.4" fill="none" stroke="#9a9a9a" stroke-width="1"/><path d="M5.1 5.1 L7.4 7.4" stroke="#9a9a9a" stroke-width="1.2"/></svg>
<div style="left:1225.5px;top:685.5px;width:0.7px;height:12px;background:#262626;"></div>
<div style="left:1241px;top:685.5px;width:0.7px;height:12px;background:#262626;"></div>
<div style="left:1257px;top:685.5px;width:0.7px;height:12px;background:#262626;"></div>
<div style="left:1273.5px;top:685.5px;width:0.7px;height:12px;background:#262626;"></div>
<div style="left:1290.5px;top:685.5px;width:0.7px;height:12px;background:#262626;"></div>
<svg style="left:1213.5px;top:688px;" width="8" height="7" viewBox="0 0 8 7"><rect x="0.4" y="0.4" width="5" height="5" fill="none" stroke="#c4c4c4" stroke-width="0.8"/><circle cx="5.2" cy="4.6" r="1.6" fill="#222222" stroke="#c4c4c4" stroke-width="0.8"/><path d="M6.3 5.8 L7.6 7" stroke="#c4c4c4" stroke-width="0.8"/></svg>
<svg style="left:1229.5px;top:688px;" width="8" height="7" viewBox="0 0 8 7"><circle cx="2" cy="2" r="1.6" fill="#c4c4c4"/><rect x="4" y="0.6" width="3.4" height="2.6" fill="#c4c4c4"/><path d="M1 6.6 L3 3.8 L5 6.6 Z" fill="#c4c4c4"/></svg>
<svg style="left:1245.5px;top:688px;" width="8" height="7" viewBox="0 0 8 7"><path d="M0.6 6.6 L1.4 4.4 L5.4 0.6 L7 2.2 L3 6 Z" fill="#c4c4c4"/></svg>
<svg style="left:1261.5px;top:687.5px;" width="8" height="8" viewBox="0 0 8 8"><circle cx="4" cy="4" r="3.5" fill="#c4c4c4"/><rect x="3.5" y="1.8" width="1" height="3" fill="#303030"/><rect x="3.5" y="5.4" width="1" height="1" fill="#303030"/></svg>
<svg style="left:1278px;top:687.5px;" width="8" height="8" viewBox="0 0 8 8"><path d="M4 0.4 L5.1 2.9 L7.8 3.1 L5.7 4.9 L6.4 7.6 L4 6.1 L1.6 7.6 L2.3 4.9 L0.2 3.1 L2.9 2.9 Z" fill="#8a8a8a"/></svg>
<svg style="left:1295px;top:688px;" width="8" height="7" viewBox="0 0 8 7"><path d="M0.4 3.5 C2 0.8 6 0.8 7.6 3.5 C6 6.2 2 6.2 0.4 3.5Z" fill="none" stroke="#6e6e6e" stroke-width="0.8"/><circle cx="4" cy="3.5" r="1.1" fill="#6e6e6e"/><path d="M1.2 6.4 L6.8 0.6" stroke="#6e6e6e" stroke-width="0.8"/></svg>
<div class="t" style="left:1304.8px;top:687px;color:#adadad;font-size:7.9px">24</div>
<div style="left:0px;top:698px;width:126px;height:158px;background:#2d2d2d;"></div>
<div style="left:125.2px;top:698px;width:0.9px;height:158px;background:#1a1a1a;"></div>
<div style="left:126px;top:698px;width:1190.5px;height:158px;background:#292929;"></div>
<div style="left:126px;top:698px;width:1190.5px;height:13px;background:#313131;"></div>
<div style="left:126px;top:710.6px;width:1190.5px;height:0.7px;background:#222222;"></div>
<div style="left:126px;top:842.8px;width:1190.5px;height:13.2px;background:#313131;"></div>
<div style="left:126px;top:842.5px;width:1190.5px;height:0.6px;background:#232323;"></div>
<div style="left:117.2px;top:698px;width:0.7px;height:158px;background:#262626;"></div>
<div style="left:118.2px;top:708.7px;width:6.3px;height:44px;background:#4c4c4c;border-radius:3px"></div>
<svg style="left:118.7px;top:701.5px;" width="5" height="4" viewBox="0 0 5 4"><path d="M0 4 H5 L2.5 0.6 Z" fill="#bdbdbd"/></svg>
<svg style="left:118.7px;top:849.5px;" width="5" height="4" viewBox="0 0 5 4"><path d="M0 0 H5 L2.5 3.4 Z" fill="#bdbdbd"/></svg>
<div style="left:0;top:698px;width:117.5px;height:158px;overflow:hidden">
<svg style="left:2.8px;top:3.0px;" width="5" height="5" viewBox="0 0 10 10"><path d="M0 1 H10 L5 8 Z" fill="#7d7d7d"/></svg>
<svg style="left:11px;top:1.2px;" width="8" height="8" viewBox="0 0 8 8"><path d="M4 0.4 L5.1 2.9 L7.8 3.1 L5.7 4.9 L6.4 7.6 L4 6.1 L1.6 7.6 L2.3 4.9 L0.2 3.1 L2.9 2.9 Z" fill="#c4c4c4"/></svg>
<div class="t b pj" style="left:21.7px;top:1px;">Favorites</div>
<svg style="left:20px;top:11.200000000000045px;" width="8" height="8" viewBox="0 0 8 8"><circle cx="3.2" cy="3.2" r="2.3" fill="none" stroke="#c4c4c4" stroke-width="0.8"/><path d="M4.9 4.9 L7.4 7.6" stroke="#c4c4c4" stroke-width="1.1"/></svg>
<div class="t pj" style="left:29.8px;top:11px;">All Materials</div>
<svg style="left:20px;top:21.200000000000045px;" width="8" height="8" viewBox="0 0 8 8"><circle cx="3.2" cy="3.2" r="2.3" fill="none" stroke="#c4c4c4" stroke-width="0.8"/><path d="M4.9 4.9 L7.4 7.6" stroke="#c4c4c4" stroke-width="1.1"/></svg>
<div class="t pj" style="left:29.8px;top:21px;">All Models</div>
<svg style="left:20px;top:31.200000000000045px;" width="8" height="8" viewBox="0 0 8 8"><circle cx="3.2" cy="3.2" r="2.3" fill="none" stroke="#c4c4c4" stroke-width="0.8"/><path d="M4.9 4.9 L7.4 7.6" stroke="#c4c4c4" stroke-width="1.1"/></svg>
<div class="t pj" style="left:29.8px;top:31px;">All Prefabs</div>
<svg style="left:2.8px;top:52.299999999999955px;" width="5" height="5" viewBox="0 0 10 10"><path d="M0 1 H10 L5 8 Z" fill="#7d7d7d"/></svg>
<svg style="left:10.5px;top:50.299999999999955px;" width="9.5" height="8" viewBox="0 0 9.5 8"><path d="M0.3 0.6 H3.3 L4.2 1.8 H7.8 V3 H2.2 L0.3 7.2 Z" fill="#c4c4c4"/><path d="M2.6 3.6 H9.3 L7.6 7.6 H0.8 Z" fill="#c4c4c4"/></svg>
<div class="t b pj" style="left:21.7px;top:50px;">Assets</div>
<svg style="left:11.5px;top:61.9px;" width="5" height="5.75" viewBox="0 0 10 10"><path d="M1 0 V10 L10 5 Z" fill="#7d7d7d"/></svg>
<svg style="left:19.8px;top:61.300000000000004px;" width="7.8" height="6.8" viewBox="0 0 9 8"><path d="M0.2 0.6 H3.4 L4.4 1.8 H8.8 V7.6 H0.2 Z" fill="#c4c4c4"/></svg>
<div class="t pj" style="left:30px;top:60px;">Audio</div>
<div style="left:0px;top:69.5px;width:117.5px;height:10px;background:#3e3e3e;"></div>
<svg style="left:19.8px;top:71.3px;" width="7.8" height="6.8" viewBox="0 0 9 8"><path d="M0.2 0.6 H3.4 L4.4 1.8 H8.8 V7.6 H0.2 Z" fill="#c4c4c4"/></svg>
<div class="t pj" style="left:30px;top:70px;">controller</div>
<svg style="left:19.8px;top:81.3px;" width="7.8" height="6.8" viewBox="0 0 9 8"><path d="M0.6 1 H3.2 L4.2 2.2 H8.4 V7.2 H0.6 Z" fill="none" stroke="#c4c4c4" stroke-width="1"/></svg>
<div class="t pj" style="left:30px;top:80px;">Editor</div>
<svg style="left:19.8px;top:91.3px;" width="7.8" height="6.8" viewBox="0 0 9 8"><path d="M0.2 0.6 H3.4 L4.4 1.8 H8.8 V7.6 H0.2 Z" fill="#c4c4c4"/></svg>
<div class="t pj" style="left:30px;top:90px;">Gift</div>
<svg style="left:19.8px;top:101.3px;" width="7.8" height="6.8" viewBox="0 0 9 8"><path d="M0.2 0.6 H3.4 L4.4 1.8 H8.8 V7.6 H0.2 Z" fill="#c4c4c4"/></svg>
<div class="t pj" style="left:30px;top:100px;">Heart</div>
<svg style="left:19.8px;top:111.3px;" width="7.8" height="6.8" viewBox="0 0 9 8"><path d="M0.6 1 H3.2 L4.2 2.2 H8.4 V7.2 H0.6 Z" fill="none" stroke="#c4c4c4" stroke-width="1"/></svg>
<div class="t pj" style="left:30px;top:110px;">Indicator</div>
<svg style="left:19.8px;top:121.3px;" width="7.8" height="6.8" viewBox="0 0 9 8"><path d="M0.2 0.6 H3.4 L4.4 1.8 H8.8 V7.6 H0.2 Z" fill="#c4c4c4"/></svg>
<div class="t pj" style="left:30px;top:120px;">Indicators</div>
<svg style="left:19.8px;top:131.29999999999998px;" width="7.8" height="6.8" viewBox="0 0 9 8"><path d="M0.6 1 H3.2 L4.2 2.2 H8.4 V7.2 H0.6 Z" fill="none" stroke="#c4c4c4" stroke-width="1"/></svg>
<div class="t pj" style="left:30px;top:130px;">New folder</div>
<svg style="left:19.8px;top:141.29999999999998px;" width="7.8" height="6.8" viewBox="0 0 9 8"><path d="M0.6 1 H3.2 L4.2 2.2 H8.4 V7.2 H0.6 Z" fill="none" stroke="#c4c4c4" stroke-width="1"/></svg>
<div class="t pj" style="left:30px;top:140px;">Resources</div>
<svg style="left:19.8px;top:151.29999999999998px;" width="7.8" height="6.8" viewBox="0 0 9 8"><path d="M0.2 0.6 H3.4 L4.4 1.8 H8.8 V7.6 H0.2 Z" fill="#c4c4c4"/></svg>
<div class="t pj" style="left:30px;top:150px;">Scenes</div>
</div>
<div class="t pj" style="left:128px;top:700px;color:#8c8c8c">Assets</div>
<svg style="left:155.5px;top:701px;" width="4" height="7" viewBox="0 0 4 7"><path d="M0.8 0.8 L3.2 3.5 L0.8 6.2" fill="none" stroke="#8c8c8c" stroke-width="0.8"/></svg>
<div class="t b pj" style="left:163px;top:700px;color:#c8c8c8">controller</div>
<svg style="left:137px;top:712.0px;" width="8" height="9" viewBox="0 0 8 9"><path d="M0.3 0.3 H5.6 L7.7 2.4 V8.7 H0.3 Z" fill="#dfe7df"/><path d="M2 3.6 H6.2 M1.8 5.6 H6 M3.4 2.2 L2.8 7 M5.2 2.2 L4.6 7" stroke="#2e7d32" stroke-width="0.85"/></svg>
<div class="t pj" style="left:146.8px;top:712px;color:#c4c4c4">AlienController</div>
<svg style="left:137px;top:722.0px;" width="8" height="9" viewBox="0 0 8 9"><path d="M0.3 0.3 H5.6 L7.7 2.4 V8.7 H0.3 Z" fill="#dfe7df"/><path d="M2 3.6 H6.2 M1.8 5.6 H6 M3.4 2.2 L2.8 7 M5.2 2.2 L4.6 7" stroke="#2e7d32" stroke-width="0.85"/></svg>
<div class="t pj" style="left:146.8px;top:722px;color:#c4c4c4">FadeController</div>
<svg style="left:137px;top:732.0px;" width="8" height="9" viewBox="0 0 8 9"><path d="M0.3 0.3 H5.6 L7.7 2.4 V8.7 H0.3 Z" fill="#dfe7df"/><path d="M2 3.6 H6.2 M1.8 5.6 H6 M3.4 2.2 L2.8 7 M5.2 2.2 L4.6 7" stroke="#2e7d32" stroke-width="0.85"/></svg>
<div class="t pj" style="left:146.8px;top:732px;color:#c4c4c4">GiftController</div>
<svg style="left:137px;top:742.0px;" width="8" height="9" viewBox="0 0 8 9"><path d="M0.3 0.3 H5.6 L7.7 2.4 V8.7 H0.3 Z" fill="#dfe7df"/><path d="M2 3.6 H6.2 M1.8 5.6 H6 M3.4 2.2 L2.8 7 M5.2 2.2 L4.6 7" stroke="#2e7d32" stroke-width="0.85"/></svg>
<div class="t pj" style="left:146.8px;top:742px;color:#c4c4c4">GiftSliderController</div>
<svg style="left:137px;top:752.0px;" width="8" height="9" viewBox="0 0 8 9"><path d="M0.3 0.3 H5.6 L7.7 2.4 V8.7 H0.3 Z" fill="#dfe7df"/><path d="M2 3.6 H6.2 M1.8 5.6 H6 M3.4 2.2 L2.8 7 M5.2 2.2 L4.6 7" stroke="#2e7d32" stroke-width="0.85"/></svg>
<div class="t pj" style="left:146.8px;top:752px;color:#c4c4c4">HeartUIController</div>
<svg style="left:137px;top:762.0px;" width="8" height="9" viewBox="0 0 8 9"><path d="M0.3 0.3 H5.6 L7.7 2.4 V8.7 H0.3 Z" fill="#dfe7df"/><path d="M2 3.6 H6.2 M1.8 5.6 H6 M3.4 2.2 L2.8 7 M5.2 2.2 L4.6 7" stroke="#2e7d32" stroke-width="0.85"/></svg>
<div class="t pj" style="left:146.8px;top:762px;color:#c4c4c4">MarsController</div>
<svg style="left:137px;top:772.0px;" width="8" height="9" viewBox="0 0 8 9"><path d="M0.3 0.3 H5.6 L7.7 2.4 V8.7 H0.3 Z" fill="#dfe7df"/><path d="M2 3.6 H6.2 M1.8 5.6 H6 M3.4 2.2 L2.8 7 M5.2 2.2 L4.6 7" stroke="#2e7d32" stroke-width="0.85"/></svg>
<div class="t pj" style="left:146.8px;top:772px;color:#c4c4c4">MarsLandingController</div>
<svg style="left:137px;top:782.0px;" width="8" height="9" viewBox="0 0 8 9"><path d="M0.3 0.3 H5.6 L7.7 2.4 V8.7 H0.3 Z" fill="#dfe7df"/><path d="M2 3.6 H6.2 M1.8 5.6 H6 M3.4 2.2 L2.8 7 M5.2 2.2 L4.6 7" stroke="#2e7d32" stroke-width="0.85"/></svg>
<div class="t pj" style="left:146.8px;top:782px;color:#c4c4c4">MeteorController</div>
<svg style="left:137px;top:792.0px;" width="8" height="9" viewBox="0 0 8 9"><path d="M0.3 0.3 H5.6 L7.7 2.4 V8.7 H0.3 Z" fill="#dfe7df"/><path d="M2 3.6 H6.2 M1.8 5.6 H6 M3.4 2.2 L2.8 7 M5.2 2.2 L4.6 7" stroke="#2e7d32" stroke-width="0.85"/></svg>
<div class="t pj" style="left:146.8px;top:792px;color:#c4c4c4">OpeningFadeController</div>
<svg style="left:137px;top:802.0px;" width="8" height="9" viewBox="0 0 8 9"><path d="M0.3 0.3 H5.6 L7.7 2.4 V8.7 H0.3 Z" fill="#dfe7df"/><path d="M2 3.6 H6.2 M1.8 5.6 H6 M3.4 2.2 L2.8 7 M5.2 2.2 L4.6 7" stroke="#2e7d32" stroke-width="0.85"/></svg>
<div class="t pj" style="left:146.8px;top:802px;color:#c4c4c4">PhaseController</div>
<svg style="left:137px;top:812.0px;" width="8" height="9" viewBox="0 0 8 9"><path d="M0.3 0.3 H5.6 L7.7 2.4 V8.7 H0.3 Z" fill="#dfe7df"/><path d="M2 3.6 H6.2 M1.8 5.6 H6 M3.4 2.2 L2.8 7 M5.2 2.2 L4.6 7" stroke="#2e7d32" stroke-width="0.85"/></svg>
<div class="t pj" style="left:146.8px;top:812px;color:#c4c4c4">WakeUpController</div>
<svg style="left:137px;top:822.0px;" width="8" height="9" viewBox="0 0 8 9"><path d="M0.3 0.3 H5.6 L7.7 2.4 V8.7 H0.3 Z" fill="#dfe7df"/><path d="M2 3.6 H6.2 M1.8 5.6 H6 M3.4 2.2 L2.8 7 M5.2 2.2 L4.6 7" stroke="#2e7d32" stroke-width="0.85"/></svg>
<div class="t pj" style="left:146.8px;top:822px;color:#c4c4c4">WorldSliderController</div>
<div style="left:1275px;top:849.3px;width:32px;height:0.8px;background:#5a5a5a;"></div>
<div style="left:1272.3px;top:846.8px;width:5.5px;height:5.5px;background:#999;border-radius:50%"></div>
<div style="left:0px;top:856px;width:1600px;height:13px;background:#101010;"></div>
<svg style="left:1554px;top:858.6px;" width="9" height="9" viewBox="0 0 9 9"><ellipse cx="4.5" cy="5" rx="2.2" ry="2.8" fill="#9a9a9a"/><circle cx="4.5" cy="2" r="1.2" fill="#9a9a9a"/><path d="M0.8 2.8 L2.6 4 M8.2 2.8 L6.4 4 M0.5 5.2 H2.3 M8.5 5.2 H6.7 M1 8 L2.7 6.6 M8 8 L6.3 6.6" stroke="#9a9a9a" stroke-width="0.7"/><path d="M0.8 8.6 L8.2 0.8" stroke="#9a9a9a" stroke-width="0.8"/></svg>
<div style="left:1567px;top:857px;width:0.6px;height:11px;background:#2a2a2a;"></div>
<svg style="left:1571px;top:858.8px;" width="9" height="9" viewBox="0 0 9 9"><ellipse cx="4.5" cy="2" rx="3.4" ry="1.4" fill="#b0b0b0"/><path d="M1.1 3.4 C1.1 5.2 7.9 5.2 7.9 3.4 V4.6 C7.9 6.4 1.1 6.4 1.1 4.6 Z M1.1 5.8 C1.1 7.6 7.9 7.6 7.9 5.8 V7 C7.9 8.8 1.1 8.8 1.1 7 Z" fill="#b0b0b0"/></svg>
<svg style="left:1587px;top:858.8px;" width="9" height="9" viewBox="0 0 9 9"><circle cx="4.5" cy="4.5" r="3.7" fill="none" stroke="#b0b0b0" stroke-width="0.8"/><path d="M2.7 4.6 L4 5.9 L6.4 3.2" fill="none" stroke="#b0b0b0" stroke-width="0.8"/></svg>
<div style="left:0px;top:869px;width:1600px;height:30px;background:#1c1c1c;"></div>
<svg style="left:710.6px;top:877.6px;" width="15" height="14.4" viewBox="0 0 15 14.4"><defs><linearGradient id="wg" x1="0" y1="0" x2="1" y2="1"><stop offset="0" stop-color="#7ddcfb"/><stop offset="1" stop-color="#2b9fe8"/></linearGradient></defs><rect x="0.5" y="0.5" width="6.6" height="6.6" rx="0.6" fill="url(#wg)"/><rect x="7.9" y="0.5" width="6.6" height="6.6" rx="0.6" fill="url(#wg)"/><rect x="0.5" y="7.9" width="6.6" height="6.6" rx="0.6" fill="url(#wg)"/><rect x="7.9" y="7.9" width="6.6" height="6.6" rx="0.6" fill="url(#wg)"/></svg>
<svg style="left:738px;top:877px;" width="16" height="14" viewBox="0 0 16 14"><path d="M0.5 1.5 A1 1 0 0 1 1.5 0.5 H5.2 L7 2.4 H14.5 A1 1 0 0 1 15.5 3.4 V12 H0.5 Z" fill="#e3a622"/><path d="M0.5 4.6 H15.5 V12.4 A1 1 0 0 1 14.5 13.4 H1.5 A1 1 0 0 1 0.5 12.4 Z" fill="#fbd35a"/><rect x="4" y="9" width="8" height="4.4" fill="#2f7fd8"/><rect x="5.5" y="10.4" width="5" height="1.2" fill="#1c5aa8"/></svg>
<svg style="left:765.5px;top:876.5px;" width="15" height="15" viewBox="0 0 15 15"><circle cx="7.5" cy="7.5" r="7.2" fill="#fff"/><path d="M7.5 7.5 L1.27 3.9 A7.2 7.2 0 0 1 13.73 3.9 Z" fill="#e33b2e"/><path d="M7.5 7.5 L13.73 3.9 A7.2 7.2 0 0 1 7.5 14.7 Z" fill="#fbc116"/><path d="M7.5 7.5 L7.5 14.7 A7.2 7.2 0 0 1 1.27 3.9 Z" fill="#2da94f"/><circle cx="7.5" cy="7.5" r="3.4" fill="#fff"/><circle cx="7.5" cy="7.5" r="2.7" fill="#3e82f1"/></svg>
<svg style="left:793.5px;top:877px;" width="15" height="14" viewBox="0 0 15 14"><path d="M1.3 4.6 L10.9 12.4 M1.3 9.4 L10.9 1.6" stroke="#8b5fd0" stroke-width="2.6" fill="none"/><rect x="0.5" y="4" width="1.9" height="6" rx="0.6" fill="#7a4fc0"/><path d="M10.2 0.5 L14.5 2.2 V11.8 L10.2 13.5 Z" fill="#a57be0"/></svg>
<svg style="left:820.5px;top:876.5px;" width="15" height="15" viewBox="0 0 15 15"><circle cx="7.5" cy="7.5" r="7.3" fill="#5865f2"/><path d="M4 5.2 C5.2 4.5 6.2 4.4 6.2 4.4 L6.5 5 C7.2 4.9 7.8 4.9 8.5 5 L8.8 4.4 C8.8 4.4 9.8 4.5 11 5.2 C11.8 6.6 12.2 8.4 12 10 C11 10.7 10 11 10 11 L9.5 10.2 C9.9 10 10.2 9.8 10.2 9.8 C8.6 10.6 6.4 10.6 4.8 9.8 C4.8 9.8 5.1 10 5.5 10.2 L5 11 C5 11 4 10.7 3 10 C2.8 8.4 3.2 6.6 4 5.2Z" fill="#fff"/><ellipse cx="6" cy="8" rx="0.9" ry="1" fill="#5865f2"/><ellipse cx="9" cy="8" rx="0.9" ry="1" fill="#5865f2"/></svg>
<svg style="left:848.5px;top:876.5px;" width="15" height="15" viewBox="0 0 15 15"><circle cx="7.5" cy="7.5" r="7.3" fill="#1ed760"/><path d="M3.4 5.6 C6 4.8 9.4 5 11.8 6.4 M3.9 7.8 C6 7.2 8.8 7.4 10.8 8.6 M4.4 9.9 C6.2 9.4 8.2 9.6 9.8 10.6" fill="none" stroke="#111" stroke-width="1.1" stroke-linecap="round"/></svg>
<div style="left:871px;top:872px;width:25px;height:25px;background:#2d2d2d;border-radius:2.5px"></div>
<svg style="left:877.5px;top:877.5px;" width="11" height="12" viewBox="0 0 11 12"><path d="M5.5 0.6 L10.2 3.2 V8.8 L5.5 11.4 L0.8 8.8 V3.2 Z" fill="#c8c8c8"/><path d="M5.5 6 V11 M5.5 6 L1.2 3.5 M5.5 6 L9.8 3.5" stroke="#2d2d2d" stroke-width="1.3" fill="none"/><path d="M5.5 0.6 V3 M0.8 8.8 L2.9 7.6 M10.2 8.8 L8.1 7.6" stroke="#2d2d2d" stroke-width="1"/></svg>
<div style="left:885.3px;top:884px;width:5.5px;height:7.5px;background:#2d2d2d;border-radius:1px"></div>
<div class="t b" style="left:885.8px;top:884px;color:#f0f0f0;font-size:7.6px">6</div>
<div style="left:771px;top:894.6px;width:4px;height:1.4px;background:#8a8a8a;border-radius:1px"></div>
<div style="left:854px;top:894.6px;width:4px;height:1.4px;background:#8a8a8a;border-radius:1px"></div>
<div style="left:879.7px;top:894.4px;width:8px;height:1.8px;background:#c79ad6;border-radius:1px"></div>
<svg style="left:1484px;top:880.5px;" width="8" height="6" viewBox="0 0 8 6"><path d="M0.8 4.8 L4 1.4 L7.2 4.8" fill="none" stroke="#e6e6e6" stroke-width="1"/></svg>
<svg style="left:1503px;top:879px;" width="11" height="11" viewBox="0 0 11 11"><rect x="0.8" y="1" width="7.4" height="6" fill="none" stroke="#e0e0e0" stroke-width="0.9"/><path d="M4.5 7 V9.2 M2.4 9.4 H6.6" stroke="#e0e0e0" stroke-width="0.9"/><rect x="7" y="0.2" width="3.4" height="4.4" fill="#1c1c1c" stroke="#e0e0e0" stroke-width="0.8"/></svg>
<svg style="left:1518.5px;top:879.5px;" width="11" height="10" viewBox="0 0 11 10"><path d="M0.5 3.6 H2.2 L4.6 1.4 V8.6 L2.2 6.4 H0.5 Z" fill="none" stroke="#e0e0e0" stroke-width="0.8"/><path d="M6 3.4 A2.4 2.4 0 0 1 6 6.6 M7.4 2.2 A4 4 0 0 1 7.4 7.8 M8.8 1 A5.8 5.8 0 0 1 8.8 9" fill="none" stroke="#e0e0e0" stroke-width="0.7"/></svg>
<svg style="left:1533.5px;top:880px;" width="11" height="9" viewBox="0 0 11 9"><rect x="1.6" y="2.6" width="8" height="4.6" rx="1" fill="none" stroke="#e0e0e0" stroke-width="0.8"/><rect x="2.6" y="3.6" width="5" height="2.6" fill="#e0e0e0"/><path d="M0.8 4 V5.8" stroke="#e0e0e0" stroke-width="0.8"/><path d="M3 0.6 L4.6 2.4 H2 Z" fill="#e0e0e0"/></svg>
<div class="t" style="right:11.700000000000045px;top:875px;color:#fff;font-size:7.2px">12:24 PM</div>
<div class="t" style="right:11.400000000000091px;top:885px;color:#fff;font-size:7.8px">1/13/2026</div>
</div></body></html>
